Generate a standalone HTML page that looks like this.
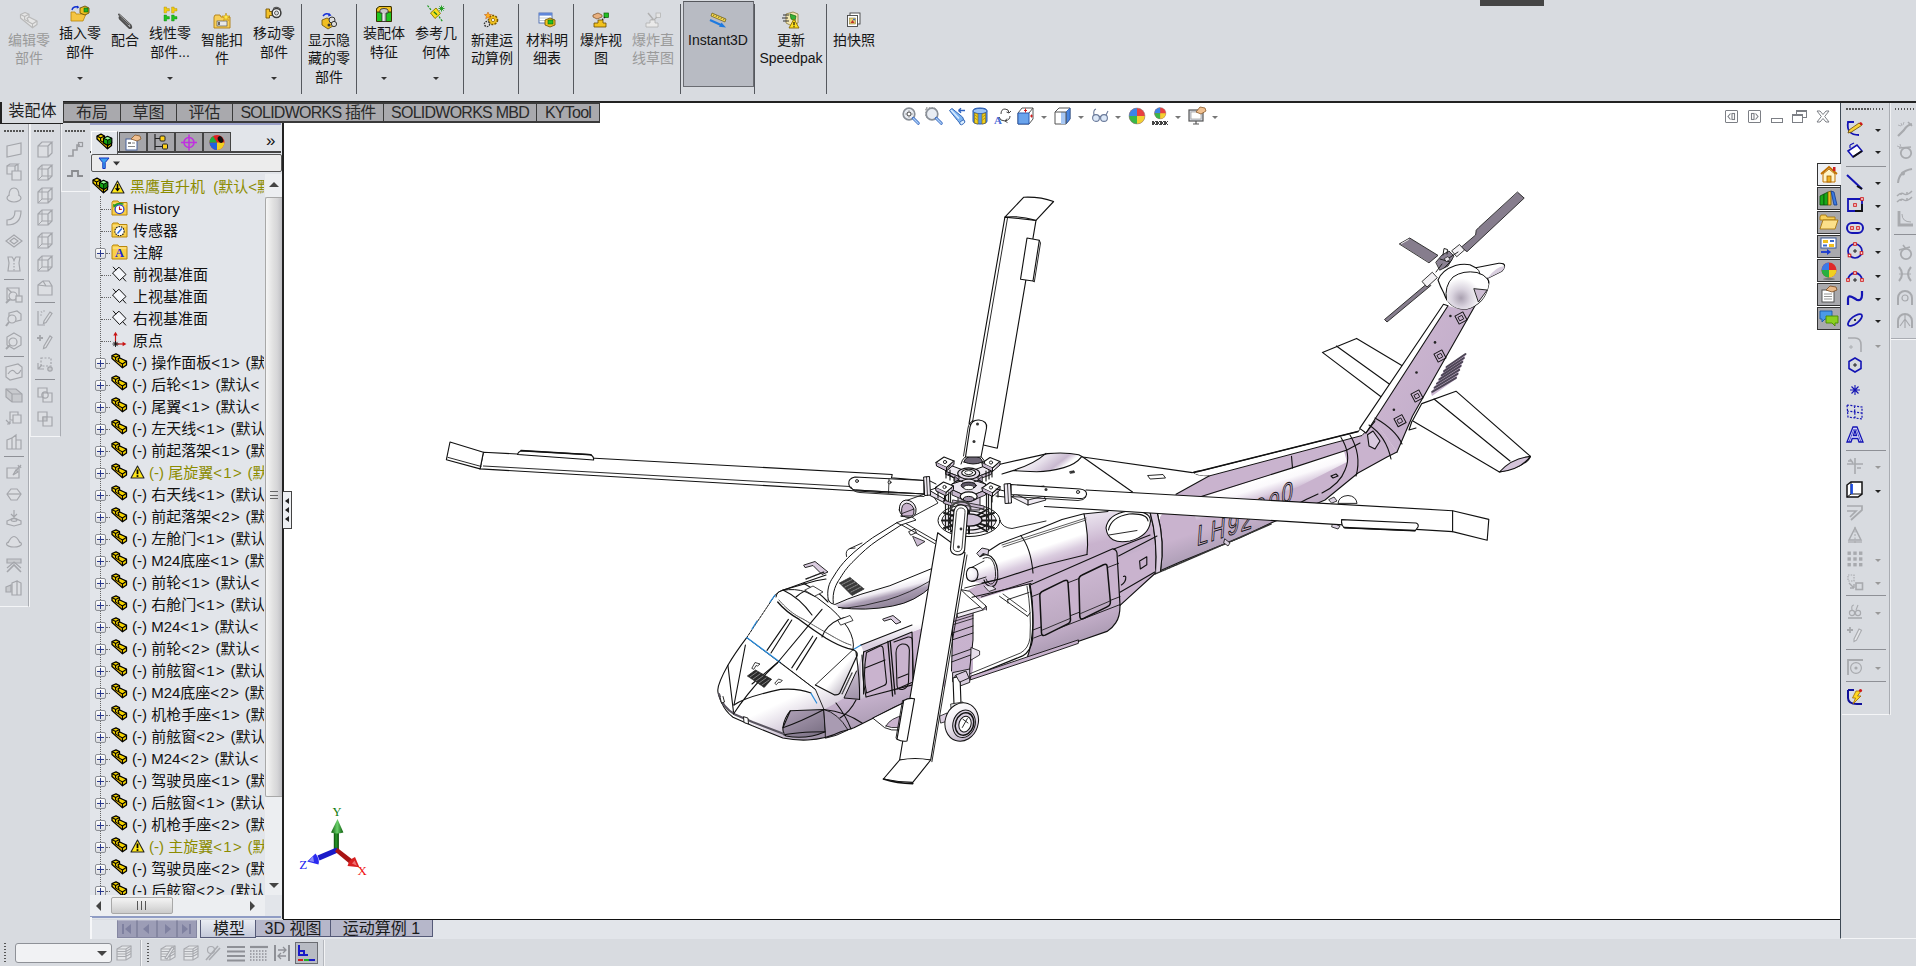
<!DOCTYPE html>
<html lang="zh-CN">
<head>
<meta charset="utf-8">
<title>黑鹰直升机 - SOLIDWORKS</title>
<style>
*{box-sizing:border-box;margin:0;padding:0}
html,body{width:1916px;height:966px;overflow:hidden;background:#d8dbe0;font-family:"Liberation Sans","Noto Sans CJK SC",sans-serif;color:#1a1a1a}
.abs{position:absolute}
#app{position:absolute;left:0;top:0;width:1916px;height:966px;overflow:hidden;background:#d8dbe0}
/* ribbon */
#ribbon{position:absolute;left:0;top:0;width:1916px;height:101px;background:#d8dbe0}
.rb{position:absolute;top:0;height:95px;text-align:center;font-size:14px;line-height:19px;color:#151515;white-space:nowrap}
.rb .t{position:absolute;left:-20px;right:-20px;text-align:center}
.rb.dis{color:#9a9a9a}
.rb svg{position:absolute}
.rsep{position:absolute;top:4px;width:1px;height:90px;background:#55585e}
.rarr{position:absolute;top:77px;width:0;height:0;border-left:3px solid transparent;border-right:3px solid transparent;border-top:3px solid #333}
#ribline{z-index:4;position:absolute;left:0;top:101px;width:1916px;height:2px;background:#222}
/* command tabs */
.ctab{z-index:5;position:absolute;top:102px;height:21px;background:#a9a9ad;border:1px solid #3a3a3a;border-width:2px 1px 2px 1px;font-size:16px;line-height:17px;color:#2a2a2a;text-align:center;white-space:nowrap;overflow:hidden}
.ctab.act{background:#d8dbe0;border-width:0 0 1px 2px;border-color:#222;height:22px;top:102px;line-height:18px;color:#222}
/* viewport */
#view{position:absolute;left:283px;top:103px;width:1557px;height:816px;background:#fff;overflow:hidden}
/* tree */
#fm{position:absolute;left:90px;top:123px;width:194px;height:796px;background:#e2e5ea;border-right:2px solid #222}
.trow{position:absolute;left:0;height:22px;font-size:15px;line-height:22px;white-space:nowrap;color:#111}
.trow.warn{color:#8c8c00}
.tx{position:absolute;top:0}
</style>
</head>
<body>
<div id="app">

<div id="ribbon">
<div class="abs" style="left:683px;top:1px;width:71px;height:86px;background:#b8bbc3;border:1px solid #6a6c72;border-top-color:#55575c"></div>
<div class="rb dis" style="left:-1px;width:60px">
<svg style="left:20px;top:11px" width="20" height="18" viewBox="0 0 20 18"><path d="M1.5 3.5 L6 1.5 L10 3.2 L10 6 L18 10 L18 13.5 L13.5 16.8 L1.5 7Z" fill="#e6e6e6" stroke="#b9b9b9" stroke-width="1.2" stroke-linejoin="round"/><path d="M1.5 3.5 L5.6 5.4 L10 3.2 M5.6 5.4 L5.6 8.4 L13.5 13 L18 10 M13.5 13 L13.5 16.8 M10 6 L8 7.2 L9.5 10" fill="none" stroke="#b9b9b9" stroke-width="1.1" stroke-linejoin="round"/></svg>
<div class="t" style="top:30.5px">编辑零</div>
<div class="t" style="top:49.2px">部件</div>
</div>
<div class="rb" style="left:50px;width:60px">
<svg style="left:20px;top:5px" width="20" height="18" viewBox="0 0 20 18"><path d="M1 8 L1 16 L13 16 L16 9 L6 9 L5 7 L1 7Z" fill="#f5c542" stroke="#b8860b" stroke-width="0.8"/><path d="M10 3 L15 1 L19 3 L19 8 L15 10 L10 8Z" fill="#f0c020" stroke="#5a4500" stroke-width="0.8"/><rect x="14" y="3" width="4" height="4" fill="#22b022" stroke="#0a600a" stroke-width="0.6"/><path d="M2 5 Q3 1 8 2" fill="none" stroke="#1030d0" stroke-width="1.4"/><path d="M7 0.5 L9.5 2.3 L6.8 3.8Z" fill="#1030d0"/></svg>
<div class="t" style="top:24px">插入零</div>
<div class="t" style="top:42.7px">部件</div>
<div class="rarr" style="left:27px"></div>
</div>
<div class="rb" style="left:95px;width:60px">
<svg style="left:21px;top:12px" width="18" height="18" viewBox="0 0 18 18"><path d="M3 2.5 L14.5 13 Q16.5 16.5 13.5 16 L4 7 Q2.5 4.5 5 5 L12.5 12" fill="none" stroke="#4e4e4e" stroke-width="1.9" stroke-linecap="round"/><path d="M3.4 2.8 L14.2 12.8" fill="none" stroke="#d8d8d8" stroke-width="0.6"/></svg>
<div class="t" style="top:30.5px">配合</div>
</div>
<div class="rb" style="left:140px;width:60px">
<svg style="left:22px;top:6px" width="16" height="16" viewBox="0 0 16 16"><g fill="#f2cc10" stroke="#a88600" stroke-width="0.4"><path d="M2 1 L4.6 1 L4.6 2.6 L7.4 2.6 L7.4 5 L4.6 5 L4.6 7 L2 7Z"/><path d="M9.6 1 L12.2 1 L12.2 2.6 L15 2.6 L15 5 L12.2 5 L12.2 7 L9.6 7Z"/></g><g fill="#1fc41f" stroke="#0a7a0a" stroke-width="0.4"><path d="M2 9 L4.6 9 L4.6 10.6 L7.4 10.6 L7.4 13 L4.6 13 L4.6 15 L2 15Z"/><path d="M9.6 9 L12.2 9 L12.2 10.6 L15 10.6 L15 13 L12.2 13 L12.2 15 L9.6 15Z"/></g></svg>
<div class="t" style="top:24px">线性零</div>
<div class="t" style="top:42.7px">部件...</div>
<div class="rarr" style="left:27px"></div>
</div>
<div class="rb" style="left:192px;width:60px">
<svg style="left:21px;top:13px" width="18" height="16" viewBox="0 0 18 16"><path d="M1 4 L1 15 L17 15 L17 4 L8 4 L7 2 L2 2 L1 4Z" fill="#f7cf5a" stroke="#b07d10" stroke-width="0.9"/><rect x="4" y="8" width="10" height="5" fill="#e8e8e8" stroke="#555" stroke-width="0.7"/><rect x="5" y="9" width="2" height="3" fill="#666"/><path d="M13 0 L14 3 L17 3 L14.6 4.8 L15.5 7.5 L13 5.8 L10.5 7.5 L11.4 4.8 L9 3 L12 3Z" fill="#ffe84a" stroke="#c08a00" stroke-width="0.6"/></svg>
<div class="t" style="top:30.5px">智能扣</div>
<div class="t" style="top:49.2px">件</div>
</div>
<div class="rb" style="left:244px;width:60px">
<svg style="left:21px;top:6px" width="18" height="16" viewBox="0 0 18 16"><path d="M1 3 L4.5 3 L4.5 5.5 L8 5.5 L8 9.5 L4.5 9.5 L4.5 12 L1 12Z" fill="#f3c12a" stroke="#7a5800" stroke-width="0.9"/><circle cx="11.5" cy="7" r="4.4" fill="#f4f4f4" stroke="#3a3a3a" stroke-width="1.5"/><circle cx="11.5" cy="7" r="2" fill="#d8dbe0" stroke="#3a3a3a" stroke-width="0.8"/><path d="M8 2.5 Q12 -0.5 16 3.5" fill="none" stroke="#3a3a3a" stroke-width="0.9"/></svg>
<div class="t" style="top:24px">移动零</div>
<div class="t" style="top:42.7px">部件</div>
<div class="rarr" style="left:27px"></div>
</div>
<div class="rb" style="left:299px;width:60px">
<svg style="left:21px;top:12px" width="18" height="18" viewBox="0 0 18 18"><path d="M3 4 Q6 0 10 3" fill="none" stroke="#1530d8" stroke-width="1.5"/><path d="M9 1 L11.5 3.5 L8 4.5Z" fill="#1530d8"/><path d="M2 8 L7 6 L13 9 L13 14 L8 17 L2 13Z" fill="#f0be20" stroke="#6a4c00" stroke-width="0.8"/><circle cx="12" cy="8" r="3" fill="#ddd" stroke="#333" stroke-width="1"/><circle cx="14" cy="12" r="2.6" fill="#ddd" stroke="#333" stroke-width="1"/><circle cx="9" cy="13" r="1.5" fill="#333"/></svg>
<div class="t" style="top:30.5px">显示隐</div>
<div class="t" style="top:49.2px">藏的零</div>
<div class="t" style="top:67.9px">部件</div>
</div>
<div class="rb" style="left:354px;width:60px">
<svg style="left:21px;top:5px" width="18" height="18" viewBox="0 0 18 18"><path d="M1.5 4 L4 1.5 L16 1.5 L16.5 4 L16.5 16.5 L1.5 16.5Z" fill="#1fc41f" stroke="#3a3000" stroke-width="1"/><path d="M1.5 4 L4 1.5 L16 1.5 L16.5 4 L16.5 7 L1.5 7Z" fill="#f2c21e" stroke="#3a3000" stroke-width="1"/><path d="M5 5.5 Q5 3.5 9 3.5 Q13 3.5 13 5.5 L13 8 L11 8 L11 16.5 L7 16.5 L7 8 L5 8Z" fill="#c9c9c9" stroke="#333" stroke-width="0.9"/><path d="M8.2 8.5 L8.2 16" stroke="#fff" stroke-width="0.9"/></svg>
<div class="t" style="top:24px">装配体</div>
<div class="t" style="top:42.7px">特征</div>
<div class="rarr" style="left:27px"></div>
</div>
<div class="rb" style="left:406px;width:60px">
<svg style="left:21px;top:5px" width="18" height="18" viewBox="0 0 18 18"><path d="M3.5 8 L9 3 L13.5 8.5 L8 13.5Z" fill="#f7df1e" stroke="#8a7400" stroke-width="0.9"/><path d="M0.5 0.5 L4 5 M12 11.5 L15.5 16.5" stroke="#1a9a1a" stroke-width="1.2" stroke-dasharray="2.2 1.2"/><path d="M6.8 6.8 L10 9.8" stroke="#1a7a1a" stroke-width="1.2"/><path d="M14.5 0.5 L14.5 6.5 M11.5 3.5 L17.5 3.5 M12.4 1.4 L16.6 5.6 M16.6 1.4 L12.4 5.6" stroke="#1a9a1a" stroke-width="0.9"/></svg>
<div class="t" style="top:24px">参考几</div>
<div class="t" style="top:42.7px">何体</div>
<div class="rarr" style="left:27px"></div>
</div>
<div class="rb" style="left:462px;width:60px">
<svg style="left:21px;top:12px" width="18" height="16" viewBox="0 0 18 16"><circle cx="10" cy="8" r="4.5" fill="#f2c21e" stroke="#7a5800" stroke-width="1.6" stroke-dasharray="2 1.3"/><circle cx="10" cy="8" r="1.6" fill="#fff" stroke="#7a5800" stroke-width="0.7"/><circle cx="4" cy="12" r="2.6" fill="#ddd" stroke="#333" stroke-width="1.3" stroke-dasharray="1.6 1"/><path d="M5 0 L6 2.4 L8.6 2.6 L6.6 4.2 L7.3 6.8 L5 5.3 L2.7 6.8 L3.4 4.2 L1.4 2.6 L4 2.4Z" fill="#ffb020" stroke="#c05000" stroke-width="0.5"/></svg>
<div class="t" style="top:30.5px">新建运</div>
<div class="t" style="top:49.2px">动算例</div>
</div>
<div class="rb" style="left:517px;width:60px">
<svg style="left:21px;top:12px" width="18" height="16" viewBox="0 0 18 16"><rect x="1" y="1" width="13" height="10" fill="#fff" stroke="#4a6ab0" stroke-width="0.9"/><rect x="1" y="1" width="13" height="2.6" fill="#5f86d8"/><path d="M1 6 L14 6 M1 8.5 L14 8.5" stroke="#9ab" stroke-width="0.6"/><path d="M7 8 L12 6 L17 8 L17 13 L12 15 L7 13Z" fill="#f2c21e" stroke="#6a4c00" stroke-width="0.8"/><rect x="10" y="8" width="5" height="4" fill="#22c022" stroke="#0a600a" stroke-width="0.6"/></svg>
<div class="t" style="top:30.5px">材料明</div>
<div class="t" style="top:49.2px">细表</div>
</div>
<div class="rb" style="left:571px;width:60px">
<svg style="left:21px;top:12px" width="18" height="16" viewBox="0 0 18 16"><path d="M1 3 L6 1 L10 3 L10 5 L5 7 L1 5Z" fill="#e8b080" stroke="#7a4a20" stroke-width="0.7"/><rect x="12" y="1" width="4.5" height="4.5" fill="#22c022" stroke="#0a600a" stroke-width="0.7"/><path d="M13 5 L8 10" stroke="#222" stroke-width="1.2" stroke-dasharray="1.5 1"/><path d="M2 11 L6 11 L6 8 L11 8 L11 11 L14 11 L14 15 L2 15Z" fill="#f2c21e" stroke="#6a4c00" stroke-width="0.8"/></svg>
<div class="t" style="top:30.5px">爆炸视</div>
<div class="t" style="top:49.2px">图</div>
</div>
<div class="rb dis" style="left:623px;width:60px">
<svg style="left:21px;top:12px" width="18" height="16" viewBox="0 0 18 16"><rect x="12" y="1" width="4.5" height="4.5" fill="#e4e4e4" stroke="#b0b0b0" stroke-width="0.7"/><path d="M4 1 L9 7 L7 8.5" fill="none" stroke="#b0b0b0" stroke-width="1.5"/><path d="M13 5 L8 10" stroke="#b0b0b0" stroke-width="1.1"/><path d="M2 11 L6 11 L6 8 L11 8 L11 11 L14 11 L14 15 L2 15Z" fill="#e9e9e9" stroke="#b0b0b0" stroke-width="0.8"/></svg>
<div class="t" style="top:30.5px">爆炸直</div>
<div class="t" style="top:49.2px">线草图</div>
</div>
<div class="rb" style="left:688px;width:60px">
<svg style="left:21px;top:11px" width="18" height="18" viewBox="0 0 18 18"><path d="M3 2 L17 8 L16 11 L2 5Z" fill="#f4d64a" stroke="#6a5a10" stroke-width="0.7"/><path d="M5 3.5 L4.5 5 M7.5 4.5 L7 6 M10 5.6 L9.5 7 M12.5 6.6 L12 8 M15 7.7 L14.5 9" stroke="#333" stroke-width="0.6"/><path d="M1 9 L12 14" stroke="#1e7ae0" stroke-width="2.2"/><path d="M17 16.5 L10 15.8 L12.5 11.5Z" fill="#1e7ae0"/></svg>
<div class="t" style="top:30.5px">Instant3D</div>
</div>
<div class="rb" style="left:761px;width:60px">
<svg style="left:21px;top:11px" width="18" height="18" viewBox="0 0 18 18"><path d="M4 3 L11 1 L16 3 L16 12 L10 15 L4 12Z" fill="#f3e6b0" stroke="#8a7a40" stroke-width="0.8"/><path d="M8 3 L14 5 L13 10 L9 8Z" fill="#35b035" stroke="#0a600a" stroke-width="0.6"/><path d="M1 4 L7 4 M0 7 L6 7 M1 10 L7 10" stroke="#333" stroke-width="1"/><path d="M12 8 L17 17 L7 17Z" fill="#ffe020" stroke="#8a6a00" stroke-width="0.9"/><path d="M12 11 L12 14.3 M12 15.2 L12 16.2" stroke="#111" stroke-width="1.2"/></svg>
<div class="t" style="top:30.5px">更新</div>
<div class="t" style="top:49.2px">Speedpak</div>
</div>
<div class="rb" style="left:824px;width:60px">
<svg style="left:22px;top:12px" width="16" height="16" viewBox="0 0 16 16"><rect x="4" y="1" width="10" height="11" fill="#fff" stroke="#444" stroke-width="0.9"/><rect x="1.5" y="3.5" width="10" height="11" fill="#fff" stroke="#444" stroke-width="0.9"/><rect x="3.5" y="6" width="6" height="6" fill="#e8d070" stroke="#7a6a20" stroke-width="0.5"/><path d="M4.5 11 L6.5 8 L8.5 11Z" fill="#c03030"/><circle cx="8" cy="7.5" r="1" fill="#3060d0"/></svg>
<div class="t" style="top:30.5px">拍快照</div>
</div>
<div class="rsep" style="left:301px"></div>
<div class="rsep" style="left:356px"></div>
<div class="rsep" style="left:463px"></div>
<div class="rsep" style="left:518px"></div>
<div class="rsep" style="left:573px"></div>
<div class="rsep" style="left:680px"></div>
<div class="rsep" style="left:754px"></div>
<div class="rsep" style="left:826px"></div>
<div class="abs" style="left:1480px;top:0;width:64px;height:6px;background:#454545"></div>
</div>
<div id="ribline" style="left:63px;width:1853px"></div>
<div class="ctab act" style="left:0px;width:63px">装配体</div>
<div class="ctab" style="left:63px;width:58px">布局</div>
<div class="ctab" style="left:120px;width:57px">草图</div>
<div class="ctab" style="left:176px;width:57px">评估</div>
<div class="ctab" style="left:232px;width:152px;letter-spacing:-0.75px">SOLIDWORKS 插件</div>
<div class="ctab" style="left:383px;width:154px;letter-spacing:-0.75px">SOLIDWORKS MBD</div>
<div class="ctab" style="left:536px;width:64px;letter-spacing:-0.75px">KYTool</div>
<div id="view">
<svg class="abs" style="left:0;top:0" width="1557" height="816" viewBox="283 103 1557 816" fill="none" stroke="#111" stroke-width="1" stroke-linejoin="round" stroke-linecap="round">
<defs>
<linearGradient id="gBoom" gradientUnits="userSpaceOnUse" x1="1272" y1="452" x2="1290" y2="513">
<stop offset="0" stop-color="#c9b3ce"/><stop offset="0.28" stop-color="#c9b3ce"/><stop offset="0.36" stop-color="#fff"/><stop offset="0.46" stop-color="#efe9f2"/><stop offset="0.6" stop-color="#c9b3ce"/><stop offset="0.85" stop-color="#c9b3ce"/><stop offset="1" stop-color="#a697ae"/></linearGradient>
<linearGradient id="gFin" gradientUnits="userSpaceOnUse" x1="1400" y1="350" x2="1450" y2="378">
<stop offset="0" stop-color="#e9e0ec"/><stop offset="0.25" stop-color="#c9b3ce"/><stop offset="0.8" stop-color="#c5b0cc"/><stop offset="1" stop-color="#b09fb8"/></linearGradient>
<linearGradient id="gCabin" gradientUnits="userSpaceOnUse" x1="1060" y1="560" x2="1088" y2="645">
<stop offset="0" stop-color="#c9b3ce"/><stop offset="0.62" stop-color="#c9b3ce"/><stop offset="1" stop-color="#a797af"/></linearGradient>
<linearGradient id="gNac" gradientUnits="userSpaceOnUse" x1="1030" y1="530" x2="1046" y2="578">
<stop offset="0" stop-color="#fff"/><stop offset="0.4" stop-color="#fff"/><stop offset="0.62" stop-color="#daccdf"/><stop offset="0.8" stop-color="#c9b3ce"/><stop offset="1" stop-color="#c3b0ca"/></linearGradient>
<linearGradient id="gNac2" gradientUnits="userSpaceOnUse" x1="1110" y1="510" x2="1124" y2="566">
<stop offset="0" stop-color="#e9e2ed"/><stop offset="0.25" stop-color="#daccdf"/><stop offset="0.5" stop-color="#c9b3ce"/><stop offset="1" stop-color="#c3b0ca"/></linearGradient>
<linearGradient id="gCowl" gradientUnits="userSpaceOnUse" x1="880" y1="540" x2="905" y2="612">
<stop offset="0" stop-color="#fff"/><stop offset="0.55" stop-color="#fff"/><stop offset="0.8" stop-color="#d9cfdf"/><stop offset="1" stop-color="#a99bb2"/></linearGradient>
<linearGradient id="gNose" gradientUnits="userSpaceOnUse" x1="760" y1="660" x2="800" y2="745">
<stop offset="0" stop-color="#fff"/><stop offset="0.5" stop-color="#fff"/><stop offset="0.8" stop-color="#d4cada"/><stop offset="1" stop-color="#9f92a8"/></linearGradient>
<linearGradient id="gChin" gradientUnits="userSpaceOnUse" x1="795" y1="708" x2="812" y2="742">
<stop offset="0" stop-color="#ab9db4"/><stop offset="0.55" stop-color="#8f8398"/><stop offset="1" stop-color="#786e82"/></linearGradient>
<linearGradient id="gSide" gradientUnits="userSpaceOnUse" x1="860" y1="640" x2="880" y2="730">
<stop offset="0" stop-color="#c9b3ce"/><stop offset="0.6" stop-color="#c6b2cd"/><stop offset="1" stop-color="#a697ae"/></linearGradient>
<linearGradient id="gDeck" gradientUnits="userSpaceOnUse" x1="1030" y1="452" x2="1050" y2="478">
<stop offset="0" stop-color="#fff"/><stop offset="0.45" stop-color="#e6dfea"/><stop offset="0.8" stop-color="#c9b9d0"/><stop offset="1" stop-color="#fff"/></linearGradient>
<linearGradient id="gDome" gradientUnits="userSpaceOnUse" x1="1450" y1="268" x2="1475" y2="310">
<stop offset="0" stop-color="#fff"/><stop offset="0.5" stop-color="#f4f0f6"/><stop offset="1" stop-color="#b7a8bf"/></linearGradient>
<linearGradient id="gWheel" gradientUnits="userSpaceOnUse" x1="948" y1="708" x2="975" y2="738">
<stop offset="0" stop-color="#fff"/><stop offset="0.5" stop-color="#ece6ef"/><stop offset="1" stop-color="#b9abc1"/></linearGradient>
</defs>
<path d="M1322.4 352.4 L1356.6 338.4 L1406 368 L1384 399 Z" fill="#fff" stroke="#111" stroke-width="1.12" />
<path d="M1336.4 346 L1392 386" fill="none" stroke="#111" stroke-width="1.12" />
<path d="M1517.7 192.3 L1524.2 198.1 L1467 251.7 L1461 247.4 L1475.6 235 L1476.2 230.2 L1478.5 227.8Z" fill="#867d8d" stroke="#222" stroke-width="0.9" />
<path d="M1399.6 243.8 L1409.7 238 L1438 255.4 L1429.3 262.6Z" fill="#867d8d" stroke="#222" stroke-width="0.9" />
<path d="M1401.5 243.5 L1408.5 239.6" fill="none" stroke="#eee" stroke-width="1" />
<path d="M1427.8 283 L1384.5 319.5 L1387 322 L1430.5 285.8Z" fill="#867d8d" stroke="#222" stroke-width="0.9" />
<path d="M1432 272.5 L1422 281.5 L1427 287 L1437 278Z" fill="#f4f2f5" stroke="#222" stroke-width="0.9" />
<path d="M1452 250.5 L1459.5 244.5 L1464.5 250 L1457 256.5Z" fill="#f4f2f5" stroke="#222" stroke-width="0.9" />
<path d="M1436 262 L1442 255 L1449 251 L1454 256 L1448 266 L1440 270Z" fill="#8a8192" stroke="#222" stroke-width="0.9" />
<path d="M1442 264 L1436 272 M1443 255 L1444 248.5 L1447.5 249.5 L1447 254 M1449 258 L1458 252 M1440 259 L1450 262 M1444 268 L1452 260" fill="none" stroke="#222" stroke-width="1" />
<path d="M1444.5 258.5 L1448 256.5 L1450 259.5 L1446.5 261.5Z" fill="#e6e2e9" stroke="#222" stroke-width="0.7" />
<path d="M1160 517 L1176 494.2 L1209 476 L1362 435.5 L1375 421 L1397 452 L1387 457 L1358 473 L1325 500 L1271 523 L1240 537.7 L1180 562 L1157 572Z" fill="url(#gBoomA)" stroke="none" stroke-width="1.12" />
<linearGradient id="gBoomA" gradientUnits="userSpaceOnUse" x1="1262" y1="470" x2="1282" y2="530"><stop offset="0" stop-color="#c9b3ce"/><stop offset="0.6" stop-color="#c9b3ce"/><stop offset="1" stop-color="#ad9eb6"/></linearGradient>
<linearGradient id="gHi" gradientUnits="userSpaceOnUse" x1="1290" y1="468.6" x2="1296.5" y2="489"><stop offset="0" stop-color="#fff"/><stop offset="0.4" stop-color="#fbf9fc"/><stop offset="0.8" stop-color="#dccfe1"/><stop offset="1" stop-color="#c9b3ce"/></linearGradient>
<path d="M1190 501 L1290 468.6 L1344 451 L1347 462 L1298 487 L1197 522Z" fill="url(#gHi)" stroke="none" stroke-width="1.12" />
<path d="M1192.4 472.6 Q1196 471 1202 470.6 L1358 431.5 L1370.5 418.3 L1375 421.5 L1362 435.5 L1209 476 Q1198 477 1192.4 472.6Z" fill="#fff" stroke="#111" stroke-width="1" />
<path d="M1192 473 L1358 431.5" fill="none" stroke="#111" stroke-width="1.6" />
<path d="M1190 500 L1290 468.6 L1347 450 L1360 443" fill="none" stroke="#111" stroke-width="1.12" />
<path d="M1291.5 456.3 L1292.5 468" fill="none" stroke="#111" stroke-width="1.12" />
<path d="M1155 573 L1180 562 L1240 537.7 L1271 523 L1325 500 L1358 473 L1387 457 L1397 452" fill="none" stroke="#111" stroke-width="1.1" />
<path d="M1155 574 L1271 524" fill="none" stroke="#333" stroke-width="1.6" stroke-dasharray="1 1.2"/>
<path d="M1338 503 Q1339 496 1348 495.5 Q1356 496 1357 503Z" fill="#fff" stroke="#111" stroke-width="0.9" />
<path d="M1329 499.5 L1334 497 L1337 501 L1332 503Z" fill="#d9cfdf" stroke="#111" stroke-width="0.8" />
<path d="M1225 539 L1230 543 L1228 546 L1224 543Z" fill="#d9cfdf" stroke="#111" stroke-width="0.8" />
<path d="M1333 523 L1340 526 L1338 529 L1332 527Z" fill="#d9cfdf" stroke="#111" stroke-width="0.8" />
<text transform="matrix(0.7 -0.225 -0.07 1 1196.5 546)" font-family="Liberation Sans,sans-serif" font-size="29" letter-spacing="3.2" fill="#c9b3ce" stroke="#111" stroke-width="1">LH92</text>
<text transform="matrix(0.7 -0.225 -0.07 1 1253.5 520)" font-family="Liberation Sans,sans-serif" font-size="29" letter-spacing="3.2" fill="#c9b3ce" stroke="#111" stroke-width="1">0</text>
<text transform="matrix(0.7 -0.225 -0.07 1 1267.5 514.5)" font-family="Liberation Sans,sans-serif" font-size="29" letter-spacing="3.2" fill="#c9b3ce" stroke="#111" stroke-width="1">0</text>
<text transform="matrix(0.7 -0.225 -0.07 1 1281 504.5)" font-family="Liberation Sans,sans-serif" font-size="29" letter-spacing="3.2" fill="#c9b3ce" stroke="#111" stroke-width="1">0</text>
<path d="M1341 437.5 Q1352 455 1345 470 Q1340 484 1322 493" fill="none" stroke="#111" stroke-width="1.12" />
<path d="M1350 435 Q1362 455 1356 476" fill="none" stroke="#111" stroke-width="1.12" />
<path d="M1318 494 Q1300 502 1297 505 L1296 513" fill="none" stroke="#111" stroke-width="1.12" />
<path d="M1331 476 L1336 474 L1338 476 L1333 478Z" fill="none" stroke="#111" stroke-width="1.12" />
<path d="M1366 433 L1448 305.8 L1459 309 L1477.7 301 L1412.5 416 L1397 452 L1375 421.5Z" fill="url(#gFin)" stroke="none" stroke-width="1.12" />
<path d="M1359.7 428.4 L1443.5 304.2 L1448 305.8 L1366 433Z" fill="#fff" stroke="#111" stroke-width="1.12" />
<path d="M1477.7 301 L1412.5 416 L1397 452" fill="none" stroke="#111" stroke-width="1.12" />
<path d="M1369 425 Q1386 436 1391 459 M1375 418 Q1396 430 1402 444 M1366 433 L1375 421" fill="none" stroke="#111" stroke-width="1.12" />
<path d="M1367.5 434.7 L1373 431 L1380 441 L1375 449 L1369 446Z" fill="#d9cadf" stroke="#111" stroke-width="1.12" />
<g transform="translate(1461 318) rotate(-28)"><rect x="-4.5" y="-4.5" width="9" height="9" stroke="#111"/><rect x="-2" y="-2" width="4" height="4" stroke="#111" stroke-width="0.8"/></g>
<g transform="translate(1440 356) rotate(-28)"><rect x="-4.5" y="-4.5" width="9" height="9" stroke="#111"/><rect x="-2" y="-2" width="4" height="4" stroke="#111" stroke-width="0.8"/></g>
<g transform="translate(1417 396) rotate(-28)"><rect x="-4.5" y="-4.5" width="9" height="9" stroke="#111"/><rect x="-2" y="-2" width="4" height="4" stroke="#111" stroke-width="0.8"/></g>
<g transform="translate(1400 420.7) rotate(-28)"><rect x="-4.5" y="-4.5" width="9" height="9" stroke="#111"/><rect x="-2" y="-2" width="4" height="4" stroke="#111" stroke-width="0.8"/></g>
<circle cx="1450.4" cy="316" r="1.3" fill="#222" stroke="none"/>
<circle cx="1435" cy="342.4" r="1.3" fill="#222" stroke="none"/>
<circle cx="1416.5" cy="372.5" r="1.3" fill="#222" stroke="none"/>
<circle cx="1393.9" cy="409.8" r="1.3" fill="#222" stroke="none"/>
<path d="M1431 393 L1446 367 L1466 354 L1456 379 L1432 396Z" fill="#cbb8d2" stroke="none" stroke-width="1.12" />
<path d="M1446.5 367.0 L1465.5 354.0" fill="none" stroke="#4d4656" stroke-width="2" />
<path d="M1444.1 371.1 L1463.9 358.0" fill="none" stroke="#4d4656" stroke-width="2" />
<path d="M1441.7 375.3 L1462.3 361.9" fill="none" stroke="#4d4656" stroke-width="2" />
<path d="M1439.4 379.4 L1460.7 365.9" fill="none" stroke="#4d4656" stroke-width="2" />
<path d="M1437.0 383.5 L1459.2 369.9" fill="none" stroke="#4d4656" stroke-width="2" />
<path d="M1434.6 387.6 L1457.6 373.8" fill="none" stroke="#4d4656" stroke-width="2" />
<path d="M1432.2 391.8 L1456.0 377.8" fill="none" stroke="#4d4656" stroke-width="2" />
<path d="M1421.8 403.6 L1456 391.2 L1530.5 456.4 Q1528 462 1519 466 Q1506 471 1499.4 472 L1412.5 420.7Z" fill="#fff" stroke="#111" stroke-width="1.12" />
<path d="M1530.5 456.4 Q1512 458 1499.4 472 Q1520 470 1530.5 456.4Z" fill="#d4c4da" stroke="#111" stroke-width="1.12" />
<path d="M1434 399 L1510 461" fill="none" stroke="#111" stroke-width="1.12" />
<path d="M1412 421 L1409 430 L1416 428" fill="none" stroke="#111" stroke-width="1.12" />
<path d="M1438 280 Q1442 270 1455.4 265.5 Q1463 263.5 1469.9 264.8 L1475.7 267.7 L1498.8 263.3 Q1505 263 1504.6 266.2 Q1504 269.5 1501.7 271.3 L1487.2 278.6 Q1489.5 281 1488.7 284.3 Q1487 294 1481.4 300.3 Q1475 307 1467 309 Q1456 310 1449.6 303.2 Q1445 298 1443.8 293 Q1440 286 1438 280Z" fill="#fff" stroke="#111" stroke-width="1.12" />
<radialGradient id="gDomeR" gradientUnits="userSpaceOnUse" cx="1461" cy="298" r="20"><stop offset="0" stop-color="#a9a0b0"/><stop offset="0.45" stop-color="#d9d3de"/><stop offset="1" stop-color="#fff"/></radialGradient>
<path d="M1446.5 300 Q1444 286 1453 277 Q1463 270 1477 272.5 Q1486 275 1488.7 284.3 Q1487 294 1481.4 300.3 Q1475 307 1467 309 Q1456 310 1449.6 303.2Z" fill="url(#gDomeR)" stroke="none" stroke-width="1.12" />
<path d="M1446.5 300 Q1444 286 1453 277 Q1463 270 1477 272.5 Q1484 274.5 1487.2 278.6" fill="none" stroke="#111" stroke-width="1" />
<path d="M1475.7 267.7 Q1480 270 1480 274" fill="none" stroke="#111" stroke-width="0.9" />
<path d="M1474.2 288.7 L1487.2 290 L1478.6 301.7Z" fill="#cdbdd3" stroke="#111" stroke-width="0.9" />
<path d="M1487.2 278.6 L1501.7 271.3 Q1504 269.5 1504.6 266.2 Q1496 266 1487.2 278.6Z" fill="#d9cfdf" stroke="none" stroke-width="1.12" />
<path d="M1000 464.2 L1047.6 453.6 Q1066 452 1078.7 454.8 L1082.8 457 L1192.4 472.6 Q1198 477 1209 476 L1176 494.2 L1132.5 492 L1000 500Z" fill="#fff" stroke="none" stroke-width="1.12" />
<path d="M1046 453.4 Q1066 452 1078.7 454.8 L1081.5 456.8 Q1076 464 1063.9 467.6 Q1050 471.5 1036.7 471.7 Q1024 471.5 1015 469.7 Q1034 464 1046 453.4Z" fill="url(#gDeck)" stroke="none" stroke-width="1.12" />
<path d="M1000 464.2 L1047.6 453.6 Q1066 452 1078.7 454.8 L1082.8 457 L1192.4 472.6" fill="none" stroke="#111" stroke-width="1.12" />
<path d="M1081.5 456.8 Q1076 464 1063.9 467.6 Q1050 471.5 1036.7 471.7 Q1020 471.4 1013.7 470.4 L1002 474" fill="none" stroke="#111" stroke-width="1.12" />
<path d="M1046 453.4 Q1034 464 1015 469.7" fill="none" stroke="#111" stroke-width="1.12" />
<path d="M1082.8 457 L1132.5 492" fill="none" stroke="#111" stroke-width="1.12" />
<path d="M1209 476 L1176 494.2" fill="none" stroke="#111" stroke-width="1.12" />
<path d="M1070 471.5 L1074 470.8 L1074.5 472.6 L1070.5 473.3Z" fill="#333" stroke="#222" stroke-width="0.8" />
<path d="M1148 475.5 L1163 474.5 L1165.5 478 L1150.5 479Z" fill="#fff" stroke="#111" stroke-width="0.9" />
<path d="M1012 497 L1028 505 L1046 500 L1044 496 L1028 500 L1016 494Z" fill="#efeaf2" stroke="#111" stroke-width="0.9" />
<path d="M1016 494 L1022 489 L1044 486 M1028 505 L1028 500" fill="none" stroke="#111" stroke-width="1.12" />
<path d="M967 571 Q968 560 980 556.5 L1000 543.5 L1040 528.5 L1062 519.5 L1084 514 Q1089 535 1087 554.5 L1040 566 L1000 579 L982 583 Q968 583 967 571Z" fill="url(#gNac)" stroke="none" stroke-width="1.12" />
<path d="M1084 514 L1108 511.5 L1152 515 L1156 545 L1155.5 573 L1120 560 L1087 554.5 Q1089 535 1084 514Z" fill="url(#gNac2)" stroke="none" stroke-width="1.12" />
<path d="M982 583 L1000 579 L1040 566 L1087 554.5 L1114 549 L1119 558.5 L1031 583.5 L975 600 L968 590Z" fill="#c9b3ce" stroke="none" stroke-width="1.12" />
<path d="M980 556.5 L1000 543.5 L1040 528.5 L1062 519.5 L1083 514 L1108 511.5" fill="none" stroke="#111" stroke-width="1.12" />
<path d="M982 583 L1000 579 L1040 566 L1087 554.5" fill="none" stroke="#111" stroke-width="1.12" />
<path d="M1020.7 535.5 Q1031 548 1033 573" fill="none" stroke="#111" stroke-width="1.12" />
<path d="M1084 513.8 Q1089 535 1087 554.5" fill="none" stroke="#111" stroke-width="1.12" />
<path d="M1002 545 L1086 518 M1003 547 L1086 520" fill="none" stroke="#333" stroke-width="0.8" />
<path d="M1106 528 Q1108 514 1128 511 Q1150 510 1150.5 521 Q1149 536 1130 541 Q1108 545 1106 528Z" fill="#fff" stroke="#111" stroke-width="1.12" />
<path d="M1108.5 530 Q1111 517 1129 514 Q1147 513 1148 521" fill="none" stroke="#111" stroke-width="1.12" />
<path d="M1109 535 L1137 530.5" fill="none" stroke="#111" stroke-width="0.9" />
<path d="M1150 512 Q1158 540 1155.5 573 M1157.5 514 Q1165 542 1160.5 571" fill="none" stroke="#111" stroke-width="1.12" />
<path d="M1150 512 L1157.5 514 Q1165 542 1160.5 571 L1155.5 573 Q1158 540 1150 512Z" fill="#daccdf" stroke="none" stroke-width="1.12" />
<path d="M1150 512 Q1158 540 1155.5 573 M1157.5 514 Q1165 542 1160.5 571" fill="none" stroke="#111" stroke-width="1.12" />
<radialGradient id="gBul" cx="0.35" cy="0.35" r="0.8"><stop offset="0" stop-color="#fff"/><stop offset="0.6" stop-color="#f1edf3"/><stop offset="1" stop-color="#b5a8bd"/></radialGradient>
<path d="M966.4 574.5 Q966.6 567.5 972 567.3 Q978 568 978 574.5 Q977.6 581.4 972 581.4 Q966.4 581 966.4 574.5Z" fill="url(#gBul)" stroke="#111" stroke-width="1.12" />
<path d="M972 567.3 L984 561 M972 581.4 L986 577" fill="none" stroke="#111" stroke-width="0.9" />
<path d="M980.4 556.6 Q986 553 991 556.5 Q998.5 563 997.8 577 Q996.5 587.5 990.5 586.5 Q985.5 585 984 580" fill="none" stroke="#111" stroke-width="1.1" />
<path d="M983 558.5 Q988 556 991.5 559.5 Q996 565 995.5 576.5 Q994.5 584.5 990.5 584 Q987 583 986 579" fill="none" stroke="#111" stroke-width="0.9" />
<path d="M977 553 L982 548 L988.7 549.5 L988 555 L983 553.5 L980 556.5Z" fill="#d9cfdf" stroke="#111" stroke-width="0.9" />
<path d="M984 586 L989 591.5 L996 589 L992.5 586.5" fill="#e6dfea" stroke="#111" stroke-width="0.8" />
<path d="M1030 585 L1114 549 L1119 558.5 L1155.5 573 L1120 605.4 Q1120 617 1115.7 622.8 Q1112 628.5 1107 631.4 L1078 641.5 L1027 658.5 Q1033 640 1033 622Z" fill="url(#gCabin)" stroke="none" stroke-width="1.12" />
<path d="M1119 558.5 L1153 545 L1155.5 573 L1120 605.4Z" fill="#c9b3ce" stroke="none" stroke-width="1.12" />
<path d="M1113.9 549 L1150 535" fill="none" stroke="#111" stroke-width="1.12" />
<path d="M1030.1 585 L1112.8 548.8 Q1116.5 549.5 1117 553 L1120 605.4 Q1120 617 1115.7 622.8 Q1112 628.5 1107 631.4 L1078 641.5 L1027 658.5 Q1032 645 1033 622.8 Q1033 600 1030.1 585Z" fill="none" stroke="#111" stroke-width="1.2" />
<path d="M1031.6 596.7 L1118.6 563.3 M1033 630 L1120 596.7 M1033.8 638 L1120 604.6" fill="none" stroke="#111" stroke-width="0.9" />
<linearGradient id="gWin" gradientUnits="userSpaceOnUse" x1="1070" y1="575" x2="1085" y2="625"><stop offset="0" stop-color="#ccb7d1"/><stop offset="1" stop-color="#b9a6be"/></linearGradient>
<path d="M1043.1 591.0 L1064.3 580.6999999999999 Q1067.8 579.3 1068.0 582.8 L1070.5 619.3 Q1070.7 622.8 1067.2 624.1999999999999 L1045.2 635.1 Q1041.7 636.5 1041.5 633.0 L1039.8 595.9 Q1039.6 592.4 1043.1 591.0Z" fill="url(#gWin)" stroke="#111" stroke-width="1.5" />
<path d="M1082.2 575.0 L1103.5 564.6999999999999 Q1107 563.3 1107.2 566.8 L1110.3999999999999 601.9 Q1110.6 605.4 1107.1 606.8 L1083.5 618.5 Q1080 619.9 1079.8 616.4 L1078.9 579.9 Q1078.7 576.4 1082.2 575.0Z" fill="url(#gWin)" stroke="#111" stroke-width="1.5" />
<path d="M1042.5 630 L1070 618.5 M1080.7 613.5 L1110 601" fill="none" stroke="#111" stroke-width="0.8" />
<path d="M1118.6 556 L1157 536 M1120 592.3 L1154.8 572" fill="none" stroke="#111" stroke-width="1.12" />
<path d="M1139.6 561 L1146.8 556.8 L1146.8 564.8 L1140.3 569Z" fill="none" stroke="#111" stroke-width="1.12" />
<path d="M1121.4 585 Q1126 582 1125.8 577 Q1125 575.5 1123.5 576.5" fill="none" stroke="#111" stroke-width="1.12" />
<path d="M1120 605.4 L1155.5 573" fill="none" stroke="#111" stroke-width="1.1" />
<path d="M953 618 L973 612 L973 669 L969.7 682 L953 682 L951.5 671Z" fill="url(#gSide)" stroke="none" stroke-width="1.12" />
<path d="M973 612 L973 640 L969.7 669 M953 618 L951.5 671" fill="none" stroke="#111" stroke-width="1" />
<path d="M952.5 633 L973 626 M952 640 L973 633 M951.8 656 L971.5 649 M951.6 662 L970.6 655" fill="none" stroke="#111" stroke-width="0.9" />
<path d="M952 622 L973 615.5 M952 625 L973 618.5" fill="none" stroke="#111" stroke-width="0.8" />
<path d="M957.3 613.7 L985.4 605.4 L986.2 609 L958 617.5Z" fill="#efeaf2" stroke="#111" stroke-width="0.9" />
<path d="M961.4 589.7 L969.7 591.3 L986.2 606.2 L983 609.5 L967 595.5Z" fill="#fff" stroke="#111" stroke-width="0.9" />
<path d="M983 609.5 L986.2 606.2 L986.5 610" fill="#b9abc1" stroke="#111" stroke-width="0.8" />
<path d="M971.3 647.6 L979.6 651 L979.6 655 L971 660Z" fill="#e6dfea" stroke="#111" stroke-width="0.8" />
<path d="M972 597.3 L1031 583.5" fill="none" stroke="#111" stroke-width="1.12" />
<path d="M964.7 588 L1000 579 M981.3 597 L1032.6 580.6" fill="none" stroke="#111" stroke-width="0.9" />
<path d="M1029.3 584.7 Q1034 610 1032.6 639.3 Q1031 651 1022.6 655.9 L961.4 680.7" fill="none" stroke="#111" stroke-width="1.2" />
<path d="M1027 586 Q1031.5 612 1030 638 Q1028.5 648.5 1020.5 653 L968 674.5" fill="none" stroke="#111" stroke-width="0.8" />
<path d="M953 672.5 L969.7 669 L969.7 682.4 L960 686 L953 682Z" fill="#d9cfdf" stroke="#111" stroke-width="0.9" />
<path d="M955 676 L962 673 L966 677.5 L960 681Z" fill="#fff" stroke="#111" stroke-width="0.8" />
<path d="M999.5 596.3 L1027.6 616.2 M1007.7 599.6 L1029 592.5 M1007.7 599.6 L1008 603 M1027.6 616.2 L1030 613" fill="none" stroke="#111" stroke-width="0.9" />
<path d="M1003 594 L1026.5 611.5" fill="none" stroke="#111" stroke-width="0.8" />
<path d="M1078 640 L1027 657 L971 676 L970 680 L1027 661 L1078 643.5Z" fill="#c9b3ce" stroke="#111" stroke-width="0.9" />
<path d="M783 590 L816 580.7 L828 595 L838 604 L870 612 L905 609 L938 598 L953 618 L913 632.5 L860.5 645 Q850 618 824 603 Q800 590 783 590Z" fill="#fff" stroke="none" stroke-width="1.12" />
<path d="M828.3 600 C826.5 590 829 583 833.3 577 C838 569 842 564 847.8 558 C856 550 864 544 872.5 537.8 L897 522.6 L903 519.5 L940 533 L932.5 585 Q915 603 892.8 606 Q865 611.5 838.4 607.4Z" fill="#fff" stroke="none" stroke-width="1.12" />
<linearGradient id="gCowl2" gradientUnits="userSpaceOnUse" x1="884" y1="586" x2="889" y2="607"><stop offset="0" stop-color="#fff"/><stop offset="0.25" stop-color="#f0ecf3"/><stop offset="0.5" stop-color="#aa9db3"/><stop offset="1" stop-color="#8e8296"/></linearGradient>
<path d="M834.8 604.5 Q848 598.5 860.9 594.3 L889.9 585.7 L932 568.5 L932.5 585 Q915 603 892.8 606 Q865 611.5 838.4 607.4Z" fill="url(#gCowl2)" stroke="none" stroke-width="1.12" />
<path d="M828.3 600 C826.5 590 829 583 833.3 577 C838 569 842 564 847.8 558 C856 550 864 544 872.5 537.8 L897 522.6" fill="none" stroke="#111" stroke-width="1" />
<path d="M833.3 603 C832 592 836 584 840 578.4 C845 570 849 565.5 853.6 561 C862 552.5 869 546 878 540 L901.4 524.8" fill="none" stroke="#111" stroke-width="1" />
<path d="M828.3 600 Q830 604 834.8 604.5 Q848 598.5 860.9 594.3 L889.9 585.7 L932 568.5" fill="none" stroke="#111" stroke-width="1" />
<path d="M842 608.8 Q866 606 887 600 Q910 593 930 581" fill="none" stroke="#111" stroke-width="0.8" />
<path d="M838.4 607.4 Q865 611.5 892.8 606 Q915 602 932 586" fill="none" stroke="#111" stroke-width="1" />
<path d="M839.5 583 L850 577.5 L864 589 L852 595.5Z" fill="#3a3a3a" stroke="#222" stroke-width="0.8" stroke-dasharray="1.2 0.8"/>
<path d="M842 584.5 L852 579.5 M845 587 L855 582 M848 589.5 L858 584.5 M851 592 L861 587" fill="none" stroke="#c8c8c8" stroke-width="0.6" stroke-dasharray="1 1"/>
<path d="M909 531.5 L914.5 529 L916.5 532.5 L911 535Z" fill="#fff" stroke="#111" stroke-width="0.9" />
<path d="M913 536.5 L925 541.5 L917.5 546Z" fill="#c9b9d0" stroke="#111" stroke-width="0.8" />
<path d="M901.4 524.8 L934.8 543.6 M904.5 522.8 L937 541.5" fill="none" stroke="#111" stroke-width="0.9" />
<path d="M846.5 556.5 Q845 550 850 548.5 L855 548 M850 548.5 L862 543" fill="none" stroke="#111" stroke-width="0.9" />
<path d="M901 516 L906.5 500.5 L930.4 492 L938 503 L912 517Z" fill="#fff" stroke="#111" stroke-width="0.9" />
<path d="M899.3 510 Q899 501 906 500 Q914 500.5 916 508.5 Q916.5 517 910 517.5 Q900.5 517.5 899.3 510Z" fill="#efeaf2" stroke="#111" stroke-width="1" />
<path d="M901.6 512 Q901 504 906.5 503.2 Q912.5 503.5 914 510 Q914.3 515 912 516 L902.5 516Z" fill="#c9b3ce" stroke="#111" stroke-width="0.9" />
<path d="M902 513.5 L914 509" fill="none" stroke="#111" stroke-width="0.8" />
<path d="M897 522.6 L912 517 L916 520 L901.4 524.8Z" fill="#fff" stroke="#111" stroke-width="0.9" />
<path d="M804 565 L815 561.5 L828 572 L822 574.5 L813 565.5 L805.5 567.5Z" fill="#daccdf" stroke="#111" stroke-width="0.9" />
<path d="M806 579 L824 572" fill="none" stroke="#222" stroke-width="1.4" stroke-dasharray="1 1"/>
<path d="M883 619 L893 615.5 L901 622 L896 624 L891 619 L884.5 621Z" fill="#daccdf" stroke="#111" stroke-width="0.9" />
<path d="M783 590 L816 580.7 L826 579" fill="none" stroke="#111" stroke-width="1.12" />
<path d="M717.8 692 Q718 683 727.9 665.2 Q735 653 746.7 637.6 L775 595.2 Q778 591.5 783 590 Q800 590 824 603 Q850 618 861 645 L866 697 L854 727.7 Q848 730 840.7 731.7 Q826 739 807.7 740 Q795 740.5 782.8 738 L751.8 725.6 L733 717.3 Q723 710 720.7 703 Q717.8 697 717.8 692Z" fill="url(#gNose)" stroke="none" stroke-width="1.12" />
<linearGradient id="gPane" gradientUnits="userSpaceOnUse" x1="822" y1="668" x2="848" y2="690"><stop offset="0" stop-color="#fff"/><stop offset="0.45" stop-color="#fff"/><stop offset="1" stop-color="#b8b0be"/></linearGradient>
<path d="M815.4 685 L834.2 694.8 Q838 695.5 839.6 693.4 L857 655.8 L853 649.7Z" fill="url(#gPane)" stroke="none" stroke-width="1.12" />
<linearGradient id="gQw" gradientUnits="userSpaceOnUse" x1="850" y1="662" x2="858" y2="700"><stop offset="0" stop-color="#d8cede"/><stop offset="1" stop-color="#9d90a6"/></linearGradient>
<path d="M856.5 671 L844 698 L859.6 699.4 L862 655Z" fill="url(#gQw)" stroke="none" stroke-width="1.12" />
<path d="M824 709.5 L836 703 L844 698 L859.6 699.4 L866 697 L913.4 684.6 L945 676 L945 686 L912 699 L894.6 707 L873 718.3 L854 727.7 Q848 730 840.7 731.7 L825.3 731.7Z" fill="url(#gSide)" stroke="none" stroke-width="1.12" />
<path d="M863.6 652 L912 632 L945 619 L945 676 L913.4 684.6 L866 696.7Z" fill="#c9b3ce" stroke="none" stroke-width="1.12" />
<linearGradient id="gRoofS" gradientUnits="userSpaceOnUse" x1="888" y1="628" x2="890" y2="643"><stop offset="0" stop-color="#fff"/><stop offset="1" stop-color="#d9cfdf"/></linearGradient>
<path d="M861 645 L912 625 L945 612 L945 619 L912 632 L863.6 652Z" fill="url(#gRoofS)" stroke="none" stroke-width="1.12" />
<path d="M790.3 710.8 L824 709.5 L825.3 731.7 Q806 740 786 736 Q782.5 733 782.9 727.7Z" fill="url(#gChin)" stroke="#111" stroke-width="1.12" />
<path d="M824 709.5 Q838 713 848 730 Q836 736.5 825.3 738.2 L825.3 731.7Z" fill="#a99bb2" stroke="#111" stroke-width="0.9" />
<path d="M721.8 702.9 Q717.5 694 717.8 690 Q718 683 727.9 665.2 Q735 653 746.7 637.6" fill="none" stroke="#111" stroke-width="1.1" />
<path d="M746.7 637.6 L775 595.2" fill="none" stroke="#111" stroke-width="1" stroke-dasharray="2.2 1.2"/>
<path d="M775 595.2 Q778 591.5 783 590" fill="none" stroke="#111" stroke-width="1" />
<path d="M721.8 702.9 Q725 711 733 717.3 L751.8 725.6 L782.8 738 Q795 740.5 807.7 740 Q826 739 840.7 731.7 Q848 730 854 727.7 L873 718.3 L894.6 707 L912 699" fill="none" stroke="#111" stroke-width="1.1" />
<path d="M719 694 Q722 707 735 714.5 L752.5 722 L784 734" fill="none" stroke="#5a5560" stroke-width="2.2" />
<path d="M745.4 645 L734 705 M727.9 665.2 L733.5 712" fill="none" stroke="#111" stroke-width="1.12" />
<path d="M734 705 Q745 697 780.4 689.4 Q798 688 811 693 M733.5 714 Q752 686 777.7 662.5" fill="none" stroke="#111" stroke-width="1.12" />
<path d="M746.7 637.6 L815.4 689.4 L824 709.5" fill="none" stroke="#111" stroke-width="0.9" />
<path d="M775 595.2 L770 602 M757 621 L752 629" fill="none" stroke="#2a8ad8" stroke-width="1.2" />
<path d="M746.7 637.6 L780.4 662.5" fill="none" stroke="#2a8ad8" stroke-width="1.3" />
<path d="M811 693.4 L816.7 703" fill="none" stroke="#2a8ad8" stroke-width="1.2" />
<path d="M853 649.7 L861 645" fill="none" stroke="#2a8ad8" stroke-width="1.2" />
<path d="M822 609.3 L777.7 662.5 L752 684" fill="none" stroke="#111" stroke-width="1.12" />
<path d="M777.7 602 Q786 612 799.2 619.4 Q812 629 826 638.3 Q838 645.5 847.7 648.4 L853 649.7" fill="none" stroke="#111" stroke-width="1.3" />
<path d="M776 597 Q776.5 592 782 590.5 Q795 588 806 592 Q818 597 824 603 Q838 613 848 628 Q855 640 853 649.7" fill="none" stroke="#111" stroke-width="1" />
<path d="M779 600 Q790 613 803 619 Q818 628 832 636 Q844 643 851 645" fill="none" stroke="#111" stroke-width="0.8" stroke-dasharray="1.4 1"/>
<path d="M822 637 Q826 625 840 619 Q846 617 850 618 M796 597 Q803 590 815 588.5" fill="none" stroke="#111" stroke-width="1.12" />
<path d="M788.4 619.4 L767 650.4 M791.8 620 L771 653 M812.7 636.2 L791.8 667.9 M816.7 637.6 L796.5 669.9" fill="none" stroke="#111" stroke-width="1.12" />
<path d="M780.4 662.5 L815.4 689.4" fill="none" stroke="#111" stroke-width="0.9" stroke-dasharray="1.5 1"/>
<path d="M815.4 685 L834.2 694.8 Q838 695.5 839.6 693.4 L857 655.8" fill="none" stroke="#111" stroke-width="1.2" />
<path d="M853 649.7 Q858.5 652 857 655.8" fill="none" stroke="#111" stroke-width="1.12" />
<path d="M853 649.7 L815.4 685" fill="none" stroke="#111" stroke-width="0.9" />
<path d="M856.5 671 L844 698 L859.6 699.4" fill="none" stroke="#111" stroke-width="1" />
<path d="M852 673 L842 694" fill="none" stroke="#444" stroke-width="1.4" stroke-dasharray="1 1"/>
<path d="M856 652 Q860 680 859.6 699.4 M862 655 Q864 680 863.6 694" fill="none" stroke="#111" stroke-width="1.12" />
<path d="M784.4 589.8 L803 583 L826 575 M783 590 Q800 598 812 615 M803 583 Q818 591 828 602" fill="none" stroke="#111" stroke-width="1.12" />
<path d="M805 590 L813 586 L823 592 L815 596Z" fill="#fff" stroke="#111" stroke-width="0.8" />
<path d="M838 620 L850 615.5 L853 620.5 L841 625Z" fill="#fff" stroke="#111" stroke-width="0.8" />
<path d="M747.4 676 L755.5 670 L771.6 679.3 L764.2 687.4Z" fill="#2a2a2a" stroke="#222" stroke-width="0.8" stroke-dasharray="1 0.8"/>
<path d="M750 677 L757 672 M753 679 L760 674 M756 681 L763 676 M759 683 L766 678 M762 685 L769 680" fill="none" stroke="#bbb" stroke-width="0.6" />
<path d="M752 668 L755 662.5 L760 664 L757.5 666 L756 665.5 L754 669Z M775 683 L778.5 679 L782.4 680.5 L780 682.6 L778.8 682 L776.6 684.4Z" fill="#fff" stroke="#111" stroke-width="0.8" />
<path d="M720 697 L721.5 703 L724.5 702 L723 696.5 M743.5 717 L744 722.5 L748.5 724 L748 718.5Z" fill="#fff" stroke="#111" stroke-width="0.9" />
<path d="M782.9 727.7 Q800 722 824 709.5 M790.3 710.8 Q784 718 782.9 727.7 M784 735 Q795 732 825.3 731.7" fill="none" stroke="#111" stroke-width="1.12" />
<path d="M836 703 Q846 716 851 729 M824 709.5 Q846 712 862 723 M840 718 Q850 712 856 700" fill="none" stroke="#111" stroke-width="1.12" />
<path d="M861 645 L912 625 M863.6 652 L912 632 L913.4 683.3" fill="none" stroke="#111" stroke-width="1.12" />
<path d="M863.6 652 Q861 675 866 696.7" fill="none" stroke="#111" stroke-width="1.12" />
<path d="M866.5 652.5 L880 646 Q882.5 645.5 883 648 L886.5 682 Q886.5 684.6 884 685.5 L866.5 693 Q862.5 675 866.5 652.5Z" fill="#c9b3ce" stroke="#111" stroke-width="1.1" />
<path d="M865 668 L885 660" fill="none" stroke="#111" stroke-width="1.12" />
<path d="M887.9 641.5 L892.6 696 M890.2 640.8 L895 694" fill="none" stroke="#111" stroke-width="1.3" />
<path d="M896 653 Q896 645.5 902 644 Q909 643.5 909.4 650 L908.5 682 Q908 688 902.5 689.5 Q897 690 897 685Z" fill="#c9b3ce" stroke="#111" stroke-width="1.1" />
<path d="M894 642 L908 637 Q912 636.5 912.4 640 L913 682 L897 689" fill="none" stroke="#111" stroke-width="1.1" />
<path d="M898 678 L908 674" fill="none" stroke="#111" stroke-width="1.12" />
<path d="M866 697 L913.4 684.6" fill="none" stroke="#111" stroke-width="1.12" />
<path d="M873 718.3 L884.7 727.7 Q892 731 898 730 L908 722 L912 699Z" fill="#fff" stroke="#111" stroke-width="0.9" />
<path d="M886 726 Q890 718 905 715 L908 722 Q898 731 886 726Z" fill="#c9b3ce" stroke="#111" stroke-width="0.8" />
<path d="M953 678 L960 676 L961 704 L954 705Z" fill="#fff" stroke="#111" stroke-width="1.12" />
<path d="M951 704 L963 702 L963.5 707 L951.5 709Z" fill="#eee" stroke="#111" stroke-width="0.8" />
<path d="M956 675 L966 671 L969 678 L960 682Z" fill="#daccdf" stroke="#111" stroke-width="0.9" />
<path d="M940 716 L947 713 L948 721 L941 723Z" fill="#daccdf" stroke="#111" stroke-width="0.8" />
<g transform="rotate(18 961.7 722)"><ellipse cx="961.7" cy="722" rx="16.5" ry="19.5" fill="url(#gWheel)" stroke="#111"/><ellipse cx="964.5" cy="723" rx="11" ry="14" fill="#d9cfdf" stroke="#111"/><ellipse cx="965" cy="723" rx="9" ry="11.5" fill="none" stroke="#111" stroke-width="1.5"/><ellipse cx="965.5" cy="723" rx="6" ry="8" fill="#fff" stroke="#111"/><path d="M962 719 L968 721 M966 717 L964 727" stroke="#111" stroke-width="0.8"/></g>
<ellipse cx="969" cy="520.5" rx="31" ry="16" fill="#fff" stroke="#111"/>
<path d="M1000 521 Q1003 528 1012 528.5 L1046 521" fill="none" stroke="#111" stroke-width="0.9" />
<ellipse cx="969" cy="520.5" rx="27" ry="13" fill="#f3eff5" stroke="#111" stroke-width="0.9"/>
<path d="M944 513 L994 528 M944 528 L994 513 M969 507.5 L969 533.5 M942 520.5 L996 520.5 M951 509.5 L987 531.5 M951 531.5 L987 509.5" fill="none" stroke="#1a1a1a" stroke-width="2" />
<ellipse cx="969" cy="520" rx="13" ry="6.2" fill="#cfc2d6" stroke="#111" stroke-width="1.2"/>
<ellipse cx="969" cy="520.5" rx="20" ry="9.5" fill="none" stroke="#111" stroke-width="1.2"/>
<path d="M958 470 L958 510 L980 510 L980 470Z" fill="#d7ccdd" stroke="#111" stroke-width="0.9" />
<path d="M952 484 L968.7 478.5 L985.5 484 L985.5 490 L968.7 497 L952 490Z" fill="#ebe5ef" stroke="#111" stroke-width="1" />
<path d="M952 490 L952 495 L968.7 502 L985.5 495 L985.5 490 L968.7 497Z" fill="#c6b7cd" stroke="#111" stroke-width="0.9" />
<ellipse cx="968.7" cy="496.5" rx="8.5" ry="4.6" fill="#fff" stroke="#111" stroke-width="1.2"/>
<ellipse cx="968.7" cy="499" rx="5.5" ry="2.6" fill="#9d90a6" stroke="#111"/>
<ellipse cx="968.7" cy="485.5" rx="7.5" ry="3.4" fill="#5d5666" stroke="#111"/>
<ellipse cx="968.7" cy="487.5" rx="5" ry="2.2" fill="#fff" stroke="#111" stroke-width="0.8"/>
<path d="M945.5 492 L945.5 530" fill="none" stroke="#222" stroke-width="1.2" />
<path d="M948.5 492 L948.5 530" fill="none" stroke="#222" stroke-width="1.2" />
<path d="M950.5 492 L950.5 530" fill="none" stroke="#222" stroke-width="1.2" />
<path d="M986.5 492 L986.5 530" fill="none" stroke="#222" stroke-width="1.2" />
<path d="M988.5 492 L988.5 530" fill="none" stroke="#222" stroke-width="1.2" />
<path d="M991.5 492 L991.5 530" fill="none" stroke="#222" stroke-width="1.2" />
<path d="M953 500 L984 506 L984 509 L953 503Z" fill="#c6b7cd" stroke="#111" stroke-width="0.8" />
<path d="M927 489 L947 500.5 L948 504.5 L930 495.5" fill="#e4dce8" stroke="#111" stroke-width="1" />
<path d="M944 500 L952 503 L952 506 L944 503.5Z" fill="#c6b7cd" stroke="#111" stroke-width="0.8" />
<path d="M951 465.5 L963 470 L959 476.5 L946 471.5Z M986 465.5 L974 470 L978 476.5 L991 471.5Z" fill="#efeaf2" stroke="#111" stroke-width="1" />
<path d="M946 471.5 L959 476.5 L959 479.5 L946 474.5Z M991 471.5 L978 476.5 L978 479.5 L991 474.5Z" fill="#c6b7cd" stroke="#111" stroke-width="0.9" />
<path d="M946 468 L946 478 M950 470 L950 480 M948 474 L954 478 L954 481 M989 468 L989 479 M992 467 L992 477 M986 471 L986 481" fill="none" stroke="#111" stroke-width="1.1" />
<path d="M955 476.5 L959 480 L955 482Z M982 476.5 L978 480 L982 482Z" fill="#a99bb2" stroke="#111" stroke-width="0.8" />
<path d="M936 462.5 L944 457 L954 461 L946.5 467.5Z" fill="#fff" stroke="#111" stroke-width="1.1" /><path d="M936 462.5 L936.5 466 L946.5 471 L946.5 467.5 M946.5 471 L954 464.5 L954 461" fill="#c6b7cd" stroke="#111" stroke-width="1" /><circle cx="945" cy="462" r="1.6" fill="#fff" stroke="#111" stroke-width="0.9"/>
<path d="M982 463.0 L990 457.5 L1000 461.5 L992.5 468.0Z" fill="#fff" stroke="#111" stroke-width="1.1" /><path d="M982 463.0 L982.5 466.5 L992.5 471.5 L992.5 468.0 M992.5 471.5 L1000 465.0 L1000 461.5" fill="#c6b7cd" stroke="#111" stroke-width="1" /><circle cx="991" cy="462.5" r="1.6" fill="#fff" stroke="#111" stroke-width="0.9"/>
<path d="M964 462 Q965 456.5 973 456 Q981.5 456.5 982.5 462 Q973 466 964 462Z" fill="#6d6675" stroke="#111" stroke-width="1" />
<path d="M961 464 Q963 455 973 454 Q984 455 985 464" fill="none" stroke="#111" stroke-width="1" />
<ellipse cx="968.7" cy="473.5" rx="11" ry="5.6" fill="#e4dce8" stroke="#111" stroke-width="1.1"/>
<ellipse cx="968.7" cy="472.8" rx="7" ry="3.6" fill="#fff" stroke="#111" stroke-width="1.1"/>
<ellipse cx="968.7" cy="472.6" rx="4" ry="2" fill="#fff" stroke="#111" stroke-width="0.9"/>
<path d="M952 484 L958 480 L963 482 M985.5 484 L979 480 L974 482" fill="none" stroke="#111" stroke-width="1" />
<path d="M935.5 487.5 L943.5 482 L953.5 486 L946.0 492.5Z" fill="#fff" stroke="#111" stroke-width="1.1" /><path d="M935.5 487.5 L936.0 491 L946.0 496 L946.0 492.5 M946.0 496 L953.5 489.5 L953.5 486" fill="#c6b7cd" stroke="#111" stroke-width="1" /><circle cx="944.5" cy="487" r="1.6" fill="#fff" stroke="#111" stroke-width="0.9"/>
<path d="M982 488.0 L990 482.5 L1000 486.5 L992.5 493.0Z" fill="#fff" stroke="#111" stroke-width="1.1" /><path d="M982 488.0 L982.5 491.5 L992.5 496.5 L992.5 493.0 M992.5 496.5 L1000 490.0 L1000 486.5" fill="#c6b7cd" stroke="#111" stroke-width="1" /><circle cx="991" cy="487.5" r="1.6" fill="#fff" stroke="#111" stroke-width="0.9"/>
<path d="M938 492 L938 498 M944.5 496 L944.5 501 M998 492 L998 497 M992 497 L992 502" fill="none" stroke="#111" stroke-width="1.1" />
<path d="M483.4 452.2 L892.2 474.5 L891.5 477.8 L924 480.6 L924 492.8 L887.5 493 L854 490.8 L480.1 468.9Z" fill="#fff" stroke="#111" stroke-width="1.12" />
<path d="M483.4 466 L850 486.5" fill="none" stroke="#111" stroke-width="0.9" />
<path d="M450 442 L483.4 452.2 L480.1 468.9 L446.4 459.7Z" fill="#fff" stroke="#111" stroke-width="1.12" />
<path d="M448 457.4 L481 466.4" fill="none" stroke="#111" stroke-width="0.9" />
<path d="M517.6 454.5 Q518 451.5 522 450.7 L590 454.6 Q594 456 593.6 460 Z" fill="#fff" stroke="#111" stroke-width="1.12" />
<path d="M521 450.6 L591 454.8" fill="none" stroke="#111" stroke-width="1.6" />
<path d="M855 477 Q848 478.5 848.8 484 Q849.5 489.5 856 490 L924 494 L924 480.5Z" fill="#fff" stroke="#111" stroke-width="1.12" />
<path d="M851 487 Q853 492 860 492.5 L924 496.5" fill="none" stroke="#111" stroke-width="0.9" />
<path d="M856 490 L924 494" fill="none" stroke="#111" stroke-width="0.9" />
<path d="M889 479 L888.5 493" fill="none" stroke="#111" stroke-width="0.8" />
<circle cx="857" cy="481" r="1.5" fill="#ccc" stroke="#111" stroke-width="0.8"/><circle cx="889.5" cy="482.3" r="1.5" fill="#ccc" stroke="#111" stroke-width="0.8"/>
<path d="M924 477 L929.5 476.5 L930.5 495 L925 495.5Z" fill="#efeaf2" stroke="#111" stroke-width="1" />
<path d="M926.5 477 L927.5 495.5" fill="none" stroke="#111" stroke-width="0.8" />
<path d="M930 481 L936 484 M930.5 490 L936 488" fill="none" stroke="#111" stroke-width="1" />
<path d="M1004.9 217.1 L1036 220.4 L997.3 448.2 L983.4 445 L984 432 L969.1 423.4Z" fill="#fff" stroke="#111" stroke-width="1.12" />
<path d="M1007.6 217.5 L972 425" fill="none" stroke="#111" stroke-width="0.9" />
<path d="M1004.9 217.1 L1023.8 197.2 Q1040 196.5 1053.6 201.5 L1036 220.4 Q1020 215.5 1004.9 217.1Z" fill="#fff" stroke="#111" stroke-width="1.12" />
<path d="M1027 238 L1039.3 240.3 L1033 281 L1020.5 279.3Z" fill="#fff" stroke="#111" stroke-width="1.12" />
<path d="M1039.3 240.3 L1040.5 243 L1034.3 282 L1033 281" fill="none" stroke="#111" stroke-width="0.9" />
<path d="M965.5 457 L970 427 Q971.5 419.5 979 420 Q987.5 421 986.5 428 L981 457Z" fill="#fff" stroke="#111" stroke-width="1.12" />
<path d="M963.5 456 L968 428 Q969 422 973 420.5" fill="none" stroke="#111" stroke-width="0.9" />
<circle cx="977.5" cy="424" r="1.5" fill="#333" stroke="none"/><circle cx="974" cy="441.5" r="1.5" fill="#333" stroke="none"/>
<path d="M1044.5 506.5 L1086 490 L1452.6 510.7 L1452.6 531.6Z" fill="#fff" stroke="none" stroke-width="1.12" />
<path d="M1086 490 L1452.6 510.7 M1044.5 506.5 L1452.6 531.6" fill="none" stroke="#111" stroke-width="1.12" />
<path d="M1452.6 510.7 L1488.8 519.4 L1487.2 540.2 L1452.6 531.6Z" fill="#fff" stroke="#111" stroke-width="1.12" />
<path d="M1341.6 519.6 L1416 523 Q1419 524 1418 527 L1415 531 L1345 528 Q1341 526 1341.6 519.6Z" fill="#fff" stroke="#111" stroke-width="1.12" />
<path d="M1344 527.5 L1415 530.5" fill="none" stroke="#111" stroke-width="1.5" />
<path d="M1011 484.5 L1080 489 Q1087 490 1086.5 494.5 Q1085.5 499 1079 498.5 L1011 494.5Z" fill="#fff" stroke="#111" stroke-width="1.12" />
<path d="M1011 496.5 L1078 500.5 Q1084 500.5 1086 497" fill="none" stroke="#111" stroke-width="0.9" />
<circle cx="1046" cy="489.5" r="1.5" fill="#333" stroke="none"/><circle cx="1078" cy="492" r="1.6" fill="#ccc" stroke="#111" stroke-width="0.8"/>
<path d="M1004.5 484 L1010.5 483.5 L1011.5 503 L1005.5 503.5Z" fill="#efeaf2" stroke="#111" stroke-width="1" />
<path d="M1007.5 484 L1008.5 503" fill="none" stroke="#111" stroke-width="0.8" />
<path d="M996 489 L1004.5 491 M996 496 L1004.5 497" fill="none" stroke="#111" stroke-width="1" />
<path d="M937.7 532.7 L965 552.6 L930.7 760 L899.6 760Z" fill="#fff" stroke="#111" stroke-width="1.12" />
<path d="M967 555 L931.9 761.7" fill="none" stroke="#111" stroke-width="0.9" />
<path d="M899.6 760 Q915 757 930.7 760 L912.8 782.4 Q897 782 883.4 779Z" fill="#fff" stroke="#111" stroke-width="1.12" />
<path d="M883.4 779 Q897 783.5 912.8 783.6" fill="none" stroke="#111" stroke-width="1.6" />
<path d="M903.7 700.4 Q909 697.5 914.5 698.8 L907 741 Q902 742 897 739.3Z" fill="#fff" stroke="#111" stroke-width="1.12" />
<path d="M897 739.3 L896 738 L902.5 700.5 L903.7 700.4" fill="none" stroke="#111" stroke-width="0.9" />
<path d="M954 511 Q955.5 504.5 961.5 505 Q968.5 506 967.7 512 L964.6 550 Q963 555.5 957 555 Q950 554 950.5 548Z" fill="#fff" stroke="#111" stroke-width="1.12" />
<path d="M956.5 512 Q957.5 507.5 961.5 508 Q965.5 508.5 965 512.5 L962 548 Q961 552 957 551.5 Q953 551 953.3 547.5Z" fill="none" stroke="#111" stroke-width="0.8" />
<path d="M951 509 Q953 501.5 962 501.5 Q971 502.5 970.5 510" fill="none" stroke="#444" stroke-width="2" />
<circle cx="961" cy="529" r="1.4" fill="#333" stroke="none"/><circle cx="958.5" cy="547" r="1.4" fill="#333" stroke="none"/>
</svg>
<svg class="abs" style="left:618px;top:3px" width="20" height="20" viewBox="0 0 20 20" fill="none"><circle cx="8" cy="8" r="5.8" fill="#e9edf3" stroke="#8a9098" stroke-width="1.7"/><path d="M12.3 12.3 L17.3 17.3" stroke="#3f6fc4" stroke-width="3" stroke-linecap="round"/><path d="M12.5 12.5 L17.2 17.2" stroke="#a9cdf6" stroke-width="1.4" stroke-linecap="round"/><path d="M8 4.5 L8 11.5 M4.5 8 L11.5 8" stroke="#555" stroke-width="0.9"/><rect x="6.3" y="6.3" width="3.4" height="3.4" fill="#fff" stroke="#555" stroke-width="0.7"/></svg>
<svg class="abs" style="left:641px;top:3px" width="20" height="20" viewBox="0 0 20 20" fill="none"><rect x="2" y="2" width="9" height="9" stroke="#555" stroke-width="0.9" stroke-dasharray="1.6 1.2"/><circle cx="8" cy="8" r="5.8" fill="#e9edf3" stroke="#8a9098" stroke-width="1.7"/><path d="M12.3 12.3 L17.3 17.3" stroke="#3f6fc4" stroke-width="3" stroke-linecap="round"/><path d="M12.5 12.5 L17.2 17.2" stroke="#a9cdf6" stroke-width="1.4" stroke-linecap="round"/></svg>
<svg class="abs" style="left:664px;top:3px" width="20" height="20" viewBox="0 0 20 20" fill="none"><path d="M2.5 4.5 L5 2.5 L15.5 11 L17.5 15.5 L13.5 18 L10.5 14.5Z" fill="#7db4f0" stroke="#3568b8" stroke-width="1"/><path d="M4 4 L12 12.5" stroke="#d9ecff" stroke-width="1.6"/><ellipse cx="15.3" cy="16.4" rx="2.9" ry="1.8" transform="rotate(-38 15.3 16.4)" fill="#dbeeff" stroke="#3568b8" stroke-width="0.9"/><path d="M18 4.5 L11.5 4.5 M11.5 4.5 L14 2.3 M11.5 4.5 L14 6.7" stroke="#2f63c0" stroke-width="1.4"/></svg>
<svg class="abs" style="left:687px;top:3px" width="20" height="20" viewBox="0 0 20 20" fill="none"><path d="M3 5 Q3 2 10 2 Q17 2 17 5 L17 15 Q17 18 10 18 Q3 18 3 15Z" fill="#5a96e0" stroke="#2a5ab0" stroke-width="1"/><ellipse cx="10" cy="5" rx="7" ry="2.6" fill="#9cc4f4" stroke="#2a5ab0" stroke-width="0.8"/><path d="M4.5 7 L4.5 17 L8 18 L8 8Z M12 8 L12 18 L15.5 17 L15.5 7Z" fill="#f0d020" stroke="#8a6a00" stroke-width="0.6"/><path d="M5 9 L7.5 11 M5 12 L7.5 14 M12.5 11 L15 9 M12.5 14 L15 12" stroke="#8a6a00" stroke-width="0.6"/></svg>
<svg class="abs" style="left:710px;top:3px" width="20" height="20" viewBox="0 0 20 20" fill="none"><text x="1" y="18" font-family="Liberation Serif,serif" font-weight="bold" font-size="11" fill="#4a6ad8">A</text><path d="M8 8 Q8 3 12 3 Q16 3 16 7 M6 11 Q7 15 12 15 Q17 14 17 10" stroke="#444" stroke-width="1"/><path d="M16 7 L18 5 M16 7 L13.5 6 M12 15 L14 12.6 M12 15 L14.5 16.6" stroke="#444" stroke-width="1"/></svg>
<svg class="abs" style="left:733px;top:3px" width="20" height="20" viewBox="0 0 20 20" fill="none"><path d="M2 7 L6 2 L17 2 L17 13 L13 18 L2 18Z" fill="#fff" stroke="#555" stroke-width="1"/><path d="M2 7 L13 7 L13 18Z" fill="#6aa4ec"/><path d="M2 7 L13 7 L13 18 L2 18Z" fill="#6aa4ec" stroke="#2a5ab0" stroke-width="1"/><path d="M13 7 L17 2" stroke="#555" stroke-width="1"/><path d="M9.5 2.5 L9.5 6.5 M8 4.5 L11 4.5 M14 10 L17 10 M15.5 8.5 L15.5 11.5" stroke="#d02020" stroke-width="1"/></svg>
<div class="abs" style="left:758px;top:13px;width:0;height:0;border-left:3px solid transparent;border-right:3px solid transparent;border-top:3px solid #777"></div>
<svg class="abs" style="left:770px;top:3px" width="20" height="20" viewBox="0 0 20 20" fill="none"><path d="M2 6 L6 2 L17 2 L17 13 L13 18 L2 18Z" fill="#fff" stroke="#555" stroke-width="1"/><path d="M13 6 L17 2 L17 13 L13 18Z" fill="#4a86e0" stroke="#2a5ab0" stroke-width="0.8"/><path d="M8 6 L13 6 L13 18 L8 18Z" fill="#a8c8f4"/><path d="M2 6 L13 6 L13 18" stroke="#555" stroke-width="1"/></svg>
<div class="abs" style="left:795px;top:13px;width:0;height:0;border-left:3px solid transparent;border-right:3px solid transparent;border-top:3px solid #777"></div>
<svg class="abs" style="left:807px;top:3px" width="20" height="20" viewBox="0 0 20 20" fill="none"><circle cx="6" cy="12" r="3.4" fill="#dce8f8" stroke="#6a7a9a" stroke-width="1.1"/><circle cx="14" cy="12" r="3.4" fill="#dce8f8" stroke="#6a7a9a" stroke-width="1.1"/><path d="M9 11 Q10 9.6 11 11 M4 9 Q3 4 6 3 M16 9 L18 5" stroke="#6a7a9a" stroke-width="1.1"/></svg>
<div class="abs" style="left:832px;top:13px;width:0;height:0;border-left:3px solid transparent;border-right:3px solid transparent;border-top:3px solid #777"></div>
<svg class="abs" style="left:844px;top:3px" width="20" height="20" viewBox="0 0 20 20" fill="none"><circle cx="10" cy="10" r="8" fill="#e84040"/><path d="M10 10 L2 10 A8 8 0 0 1 10 2Z" fill="#3a84e8"/><path d="M10 10 L10 18 A8 8 0 0 1 2 10Z" fill="#38b848"/><path d="M10 10 L18 10 A8 8 0 0 1 10 18Z" fill="#f4d030"/><circle cx="10" cy="10" r="8" fill="none" stroke="#888" stroke-width="0.5"/></svg>
<svg class="abs" style="left:867px;top:3px" width="20" height="20" viewBox="0 0 20 20" fill="none"><g transform="translate(3 0) scale(0.72)"><circle cx="10" cy="10" r="8" fill="#e84040"/><path d="M10 10 L2 10 A8 8 0 0 1 10 2Z" fill="#3a84e8"/><path d="M10 10 L10 18 A8 8 0 0 1 2 10Z" fill="#38b848"/><path d="M10 10 L18 10 A8 8 0 0 1 10 18Z" fill="#f4d030"/><circle cx="10" cy="10" r="8" fill="none" stroke="#888" stroke-width="0.5"/></g><path d="M2 15 L18 15 L18 19 L2 19Z" fill="#444"/><path d="M4 15 L6 17 L4 19 M8 15 L10 17 L8 19 M12 15 L14 17 L12 19 M16 15 L18 17 L16 19" stroke="#fff" stroke-width="1"/></svg>
<div class="abs" style="left:892px;top:13px;width:0;height:0;border-left:3px solid transparent;border-right:3px solid transparent;border-top:3px solid #777"></div>
<svg class="abs" style="left:904px;top:3px" width="20" height="20" viewBox="0 0 20 20" fill="none"><rect x="2" y="4" width="14" height="11" fill="#d8dce4" stroke="#555" stroke-width="1.2"/><rect x="4" y="6" width="10" height="7" fill="#fff" stroke="#888" stroke-width="0.6"/><path d="M6 18 L12 18 M9 15 L9 18" stroke="#555" stroke-width="1.2"/><path d="M9 6 L13 1 L18 2 L19 5 L14 8Z" fill="#f0c090" stroke="#8a5a2a" stroke-width="0.8"/></svg>
<div class="abs" style="left:929px;top:13px;width:0;height:0;border-left:3px solid transparent;border-right:3px solid transparent;border-top:3px solid #777"></div>
<div class="abs" style="left:1442px;top:7px;width:13px;height:13px;border:1px solid #7c7f85;border-radius:1px"></div>
<svg class="abs" style="left:1444px;top:9px" width="9" height="9" viewBox="0 0 9 9" fill="none" stroke="#7c7f85" stroke-width="1.1"><path d="M3.5 1.5 L1 4.5 L3.5 7.5"/><rect x="5" y="1.5" width="2.5" height="6"/></svg>
<div class="abs" style="left:1465px;top:7px;width:13px;height:13px;border:1px solid #7c7f85;border-radius:1px"></div>
<svg class="abs" style="left:1467px;top:9px" width="9" height="9" viewBox="0 0 9 9" fill="none" stroke="#7c7f85" stroke-width="1.1"><path d="M5.5 1.5 L8 4.5 L5.5 7.5"/><rect x="1.5" y="1.5" width="2.5" height="6"/></svg>
<div class="abs" style="left:1488px;top:15px;width:12px;height:5px;border:1px solid #7c7f85"></div>
<div class="abs" style="left:1513px;top:7px;width:11px;height:8px;border:1px solid #7c7f85;border-top-width:2px"></div>
<div class="abs" style="left:1509px;top:11px;width:11px;height:9px;border:1px solid #7c7f85;border-top-width:2px;background:#fff"></div>
<svg class="abs" style="left:1533px;top:7px" width="14" height="13" viewBox="0 0 14 13" fill="#fff" stroke="#7c7f85" stroke-width="1"><path d="M1 1 L4 1 L7 4.5 L10 1 L13 1 L8.7 6.5 L13 12 L10 12 L7 8.5 L4 12 L1 12 L5.3 6.5Z"/></svg>
<svg class="abs" style="left:13px;top:701px" width="76" height="78" viewBox="296 804 76 78">
<defs><linearGradient id="tg" x1="0" x2="1"><stop offset="0" stop-color="#0a4a0a"/><stop offset="0.45" stop-color="#2a9a2a"/><stop offset="1" stop-color="#0a4a0a"/></linearGradient>
<linearGradient id="tg2" x1="0" x2="1"><stop offset="0" stop-color="#0a5a0a"/><stop offset="0.5" stop-color="#6ad06a"/><stop offset="1" stop-color="#0a5a0a"/></linearGradient></defs>
<path d="M333.8 850 L333.8 831.5 L338.9 831.5 L338.9 850Z" fill="url(#tg)"/><path d="M331 832.6 L337.5 819 L343.4 832.6 Q337 834.5 331 832.6Z" fill="url(#tg2)"/>
<path d="M336.5 847.5 L317.5 855.6 L319.5 860.6 L338 852.5Z" fill="#1a1ac8"/><path d="M315.5 853.5 L307.2 861.5 L318.5 864.5 Q320 859 315.5 853.5Z" fill="#2a2af0"/><path d="M313 856 L309 861 L314 862Z" fill="#8a8af8"/>
<path d="M335 851.5 L350 864 L353 860 L337.5 848Z" fill="#a81414"/><path d="M347.5 866 L359.4 867.2 L355 857 Q349 859.5 347.5 866Z" fill="#d82020"/><path d="M352 863.5 L357 865.8 L354.6 860.5Z" fill="#f07070"/>
<text x="332.6" y="816.4" font-family="Liberation Serif,serif" font-size="12.5" fill="#0a7a0a">Y</text>
<text x="299.3" y="869" font-family="Liberation Serif,serif" font-size="13" fill="#1a1af0">Z</text>
<text x="357.6" y="875" font-family="Liberation Serif,serif" font-size="13" fill="#f01010">X</text>
</svg>
</div>
<div class="abs" style="left:0;top:123px;width:29px;height:484px;border-right:1px solid #a9acb2;border-bottom:1px solid #f4f5f7;box-shadow:1px 0 0 #f4f5f7"></div>
<div class="abs" style="left:30px;top:123px;width:31px;height:314px;border-right:1px solid #a9acb2;border-bottom:1px solid #f4f5f7;border-left:1px solid #f0f1f3"></div>
<div class="abs" style="left:61px;top:123px;width:29px;height:69px;border-bottom:1px solid #f4f5f7;border-left:1px solid #f0f1f3"></div>
<div class="abs" style="left:4px;top:130px;width:21px;height:2px;background:repeating-linear-gradient(90deg,#555 0 1.5px,transparent 1.5px 3px)"></div>
<div class="abs" style="left:34px;top:130px;width:21px;height:2px;background:repeating-linear-gradient(90deg,#555 0 1.5px,transparent 1.5px 3px)"></div>
<div class="abs" style="left:65px;top:130px;width:21px;height:2px;background:repeating-linear-gradient(90deg,#555 0 1.5px,transparent 1.5px 3px)"></div>
<svg class="abs" style="left:3.5px;top:140px" width="20" height="20" viewBox="0 0 20 20" fill="none" stroke="#a4a6ab" stroke-width="1.2"><path d="M3 6 L17 3 L17 14 L3 17Z" fill="#dcdee2"/></svg>
<svg class="abs" style="left:3.5px;top:162.5px" width="20" height="20" viewBox="0 0 20 20" fill="none" stroke="#a4a6ab" stroke-width="1.2"><path d="M3 3 L11 3 L11 11 L3 11Z" fill="#dcdee2"/><path d="M8 8 L17 8 L17 17 L8 17Z" fill="#dcdee2"/><path d="M3 3 L6 1 L14 1 L11 3 M14 1 L14 8"/></svg>
<svg class="abs" style="left:3.5px;top:185.5px" width="20" height="20" viewBox="0 0 20 20" fill="none" stroke="#a4a6ab" stroke-width="1.2"><ellipse cx="10" cy="12" rx="7" ry="4" fill="#dcdee2"/><path d="M5 10 Q5 2 10 2 Q15 2 15 10" fill="#dcdee2"/></svg>
<svg class="abs" style="left:3.5px;top:208px" width="20" height="20" viewBox="0 0 20 20" fill="none" stroke="#a4a6ab" stroke-width="1.2"><path d="M3 17 L3 12 Q11 12 11 3 L17 3 Q17 17 3 17Z" fill="#dcdee2"/></svg>
<svg class="abs" style="left:3.5px;top:231px" width="20" height="20" viewBox="0 0 20 20" fill="none" stroke="#a4a6ab" stroke-width="1.2"><path d="M2 10 L10 4 L18 10 L10 16Z" fill="#dcdee2"/><path d="M6 10 L10 7 L14 10 L10 13Z"/></svg>
<svg class="abs" style="left:3.5px;top:254px" width="20" height="20" viewBox="0 0 20 20" fill="none" stroke="#a4a6ab" stroke-width="1.2"><path d="M4 3 L8 3 L10 6 L12 3 L16 3 L15 9 L16 17 L4 17 L5 9Z" fill="#dcdee2"/><path d="M10 6 L10 17" stroke-dasharray="1.5 1.5"/></svg>
<div class="abs" style="left:4px;top:279px;width:20px;height:1px;background:#8e9096"></div>
<svg class="abs" style="left:3.5px;top:285px" width="20" height="20" viewBox="0 0 20 20" fill="none" stroke="#a4a6ab" stroke-width="1.2"><path d="M3 3 L15 3 L15 15 L3 15Z" fill="#dcdee2"/><path d="M3 3 L15 15" /><circle cx="9" cy="11" r="4" fill="#dcdee2"/><path d="M6 14 L2 18" stroke-width="2"/><rect x="12" y="11" width="6" height="6" fill="#dcdee2"/></svg>
<svg class="abs" style="left:3.5px;top:308px" width="20" height="20" viewBox="0 0 20 20" fill="none" stroke="#a4a6ab" stroke-width="1.2"><path d="M5 5 L13 3 L17 6 L17 12 L9 14 L5 11Z" fill="#dcdee2"/><circle cx="8" cy="11" r="4" fill="#dcdee2"/><path d="M5 14 L2 18" stroke-width="2"/></svg>
<svg class="abs" style="left:3.5px;top:331px" width="20" height="20" viewBox="0 0 20 20" fill="none" stroke="#a4a6ab" stroke-width="1.2"><path d="M10 2 L17 6 L17 14 L10 18 L3 14 L3 6Z" fill="#dcdee2"/><circle cx="9" cy="11" r="4" fill="#dcdee2"/><path d="M6 14 L2 18" stroke-width="2"/></svg>
<div class="abs" style="left:4px;top:356px;width:20px;height:1px;background:#8e9096"></div>
<svg class="abs" style="left:3.5px;top:362px" width="20" height="20" viewBox="0 0 20 20" fill="none" stroke="#a4a6ab" stroke-width="1.2"><path d="M2 5 L14 2 L18 5 L18 15 L6 18 L2 15Z" fill="#dcdee2"/><path d="M4 12 Q8 6 11 10 T17 8"/></svg>
<svg class="abs" style="left:3.5px;top:385px" width="20" height="20" viewBox="0 0 20 20" fill="none" stroke="#a4a6ab" stroke-width="1.2"><path d="M2 4 L12 4 L18 9 L18 17 L8 17 L2 12Z" fill="#c8cace"/><path d="M2 4 L8 9 L18 9 M8 9 L8 17"/></svg>
<svg class="abs" style="left:3.5px;top:408px" width="20" height="20" viewBox="0 0 20 20" fill="none" stroke="#a4a6ab" stroke-width="1.2"><path d="M6 4 L14 4 L14 12 L6 12Z" fill="#dcdee2"/><path d="M9 7 L17 7 L17 15 L9 15Z" fill="#dcdee2"/><path d="M2 12 L6 16 M6 16 L6 13 M6 16 L3 16"/></svg>
<svg class="abs" style="left:3.5px;top:432px" width="20" height="20" viewBox="0 0 20 20" fill="none" stroke="#a4a6ab" stroke-width="1.2"><path d="M3 8 L8 6 L8 17 L3 17Z M8 6 L12 3 L12 17 L8 17 M12 8 L17 8 L17 17 L12 17" fill="#dcdee2"/></svg>
<div class="abs" style="left:4px;top:456px;width:20px;height:1px;background:#8e9096"></div>
<svg class="abs" style="left:3.5px;top:463px" width="20" height="20" viewBox="0 0 20 20" fill="none" stroke="#a4a6ab" stroke-width="1.2"><path d="M3 5 L15 5 L15 15 L3 15Z" fill="#dcdee2"/><path d="M11 9 L17 2 M14 2 L15 4 M17 5 L16 3" /><path d="M9 12 L12 7 L14 9Z" fill="#c8cace"/></svg>
<svg class="abs" style="left:3.5px;top:486px" width="20" height="20" viewBox="0 0 20 20" fill="none" stroke="#a4a6ab" stroke-width="1.2"><path d="M3 8 L7 3 L13 3 L17 8 L13 14 L7 14Z" fill="#dcdee2"/><path d="M3 8 L17 8"/></svg>
<svg class="abs" style="left:3.5px;top:508px" width="20" height="20" viewBox="0 0 20 20" fill="none" stroke="#a4a6ab" stroke-width="1.2"><path d="M3 13 L10 10 L17 13 L17 16 L10 18 L3 16Z" fill="#dcdee2"/><path d="M10 2 L10 9 M7 6 L10 9 L13 6"/><ellipse cx="10" cy="12" rx="3" ry="1.3"/></svg>
<svg class="abs" style="left:3.5px;top:532px" width="20" height="20" viewBox="0 0 20 20" fill="none" stroke="#a4a6ab" stroke-width="1.2"><ellipse cx="10" cy="12" rx="7.5" ry="3" fill="#dcdee2"/><path d="M4 11 Q10 -2 16 11" fill="#dcdee2"/></svg>
<svg class="abs" style="left:3.5px;top:555px" width="20" height="20" viewBox="0 0 20 20" fill="none" stroke="#a4a6ab" stroke-width="1.2"><path d="M3 4 L17 4 L17 8 L3 8Z" fill="#c8cace"/><path d="M3 17 L10 10 L17 17" stroke-width="1.6"/><path d="M3 13 L10 7 L17 13"/></svg>
<svg class="abs" style="left:3.5px;top:578px" width="20" height="20" viewBox="0 0 20 20" fill="none" stroke="#a4a6ab" stroke-width="1.2"><path d="M2 9 L7 7 L7 14 L2 14Z" fill="#c8cace"/><path d="M8 5 L13 3 L13 17 L8 17Z M13 3 L17 5 L17 17 L13 17" fill="#dcdee2"/></svg>
<svg class="abs" style="left:34.5px;top:140px" width="20" height="20" viewBox="0 0 20 20" fill="none" stroke="#a4a6ab" stroke-width="1.2"><path d="M3 6 L13 6 L13 17 L3 17Z M3 6 L7 2 L17 2 L13 6 M17 2 L17 13 L13 17" fill="#dcdee2"/></svg>
<svg class="abs" style="left:34.5px;top:162.5px" width="20" height="20" viewBox="0 0 20 20" fill="none" stroke="#a4a6ab" stroke-width="1.2"><path d="M3 6 L13 6 L13 17 L3 17Z M3 6 L7 2 L17 2 L13 6 M17 2 L17 13 L13 17" fill="#dcdee2"/><path d="M7 2 L7 13 L3 17 M7 13 L17 13" stroke-width="1"/></svg>
<svg class="abs" style="left:34.5px;top:185.5px" width="20" height="20" viewBox="0 0 20 20" fill="none" stroke="#a4a6ab" stroke-width="1.2"><path d="M3 6 L13 6 L13 17 L3 17Z M3 6 L7 2 L17 2 L13 6 M17 2 L17 13 L13 17" fill="#dcdee2"/><path d="M7 2 L7 13 L3 17 M7 13 L17 13" stroke-width="1"/></svg>
<svg class="abs" style="left:34.5px;top:208px" width="20" height="20" viewBox="0 0 20 20" fill="none" stroke="#a4a6ab" stroke-width="1.2"><path d="M3 6 L13 6 L13 17 L3 17Z M3 6 L7 2 L17 2 L13 6 M17 2 L17 13 L13 17" fill="#dcdee2"/><path d="M7 2 L7 13 L3 17 M7 13 L17 13" stroke-width="1"/></svg>
<svg class="abs" style="left:34.5px;top:231px" width="20" height="20" viewBox="0 0 20 20" fill="none" stroke="#a4a6ab" stroke-width="1.2"><path d="M3 6 L13 6 L13 17 L3 17Z M3 6 L7 2 L17 2 L13 6 M17 2 L17 13 L13 17" fill="#dcdee2"/><path d="M7 2 L7 13 L3 17 M7 13 L17 13" stroke-width="1"/></svg>
<svg class="abs" style="left:34.5px;top:254px" width="20" height="20" viewBox="0 0 20 20" fill="none" stroke="#a4a6ab" stroke-width="1.2"><path d="M3 6 L13 6 L13 17 L3 17Z M3 6 L7 2 L17 2 L13 6 M17 2 L17 13 L13 17" fill="#dcdee2"/><path d="M7 2 L7 13 L3 17 M7 13 L17 13" stroke-width="1"/></svg>
<svg class="abs" style="left:34.5px;top:278px" width="20" height="20" viewBox="0 0 20 20" fill="none" stroke="#a4a6ab" stroke-width="1.2"><path d="M3 7 L8 3 L14 3 L17 8 L17 17 L3 17Z" fill="#dcdee2"/><path d="M8 3 L11 8 L17 8 M11 8 L3 7"/></svg>
<div class="abs" style="left:35px;top:302px;width:20px;height:1px;background:#8e9096"></div>
<svg class="abs" style="left:34.5px;top:308px" width="20" height="20" viewBox="0 0 20 20" fill="none" stroke="#a4a6ab" stroke-width="1.2"><path d="M3 3 L3 17 L10 17"/><path d="M9 13 L15 4 L17 5.5 L11 14.5 L8.5 15.5Z" fill="#dcdee2"/><path d="M6 3 L7 5 M9 2 L9 4 M5 7 L7 7" stroke-width="0.8"/></svg>
<svg class="abs" style="left:34.5px;top:331px" width="20" height="20" viewBox="0 0 20 20" fill="none" stroke="#a4a6ab" stroke-width="1.2"><path d="M2 7 L8 7 M5 4 L5 10" stroke-width="1.8"/><path d="M9 15 L15 5 L17 6.5 L11 16.5 L8.5 17.5Z" fill="#dcdee2"/></svg>
<svg class="abs" style="left:34.5px;top:354px" width="20" height="20" viewBox="0 0 20 20" fill="none" stroke="#a4a6ab" stroke-width="1.2"><path d="M6 4 L16 4 L16 12 L6 12Z" stroke-dasharray="2 1.5"/><path d="M3 9 L3 15 L9 15 M3 15 L7 11"/><circle cx="15" cy="15" r="2.2" fill="#c8cace"/></svg>
<div class="abs" style="left:35px;top:379px;width:20px;height:1px;background:#8e9096"></div>
<svg class="abs" style="left:34.5px;top:385px" width="20" height="20" viewBox="0 0 20 20" fill="none" stroke="#a4a6ab" stroke-width="1.2"><path d="M3 3 L12 3 L12 12 L3 12Z" fill="#dcdee2"/><path d="M8 8 L17 8 L17 17 L8 17Z" fill="#dcdee2"/><circle cx="10" cy="10" r="3.2"/></svg>
<svg class="abs" style="left:34.5px;top:409px" width="20" height="20" viewBox="0 0 20 20" fill="none" stroke="#a4a6ab" stroke-width="1.2"><path d="M3 3 L12 3 L12 12 L3 12Z" fill="#dcdee2"/><path d="M8 8 L17 8 L17 17 L8 17Z" fill="#dcdee2"/><path d="M8 8 L12 8 L12 12 L8 12Z" fill="#c8cace"/></svg>
<svg class="abs" style="left:65px;top:140px" width="20" height="20" viewBox="0 0 20 20" fill="none" stroke="#a4a6ab" stroke-width="1.2"><path d="M3 16 L8 16 L8 10 L12 10 L12 5 L15 5" stroke="#9a9ca0" stroke-width="1.6"/><rect x="13.5" y="2.5" width="4" height="4" stroke="#9a9ca0"/></svg>
<svg class="abs" style="left:65px;top:163px" width="20" height="20" viewBox="0 0 20 20" fill="none" stroke="#a4a6ab" stroke-width="1.2"><path d="M2 13 L7 13 L7 8 L13 8 L13 13 L18 13" stroke="#8a8c90" stroke-width="1.8"/></svg>
<div id="fm">
<div class="abs" style="left:0;top:0;width:191px;height:2px;background:#9aa0c8"></div>
<div class="abs" style="left:0;top:28px;width:191px;height:2px;background:#444"></div>
<div class="abs" style="left:1px;top:8px;width:27px;height:23px;background:#e2e5ea;border:1px solid #555;border-bottom:none;border-left-color:#fff;border-top-color:#fff"></div>
<div class="abs" style="left:29px;top:9px;width:28px;height:20px;background:#a6a6aa;border:1px solid #444"></div>
<div class="abs" style="left:57px;top:9px;width:28px;height:20px;background:#a6a6aa;border:1px solid #444"></div>
<div class="abs" style="left:85px;top:9px;width:28px;height:20px;background:#a6a6aa;border:1px solid #444"></div>
<div class="abs" style="left:113px;top:9px;width:28px;height:20px;background:#a6a6aa;border:1px solid #444"></div>
<svg class="abs" style="left:6px;top:10px" width="17" height="17" viewBox="0 0 17 17"><path d="M1 3 L5 1.2 L8.5 3 L8.5 5 L15.5 9 L15.5 12.5 L11.5 15.8 L1 6Z" fill="#f5d400" stroke="#000" stroke-width="1.3" stroke-linejoin="round"/><path d="M1 3 L4.6 5 L8.5 3 M4.6 5 L4.6 7.8 L11.5 12 L15.5 9 M11.5 12 L11.5 15.8" fill="none" stroke="#000" stroke-width="1.1" stroke-linejoin="round"/><path d="M4.6 8.2 L11 12.4 L11 14.6 L2 6.4 Z" fill="#c89a00"/><path d="M7.5 5.2 L11.5 3.4 L15.8 5.2 L15.8 10 L11.8 12.4 L7.5 10Z" fill="#12a812" stroke="#000" stroke-width="1.2" stroke-linejoin="round"/><path d="M7.5 5.2 L11.8 7.2 L15.8 5.2 M11.8 7.2 L11.8 12.4" fill="none" stroke="#000" stroke-width="1"/><path d="M8.8 5.3 L11.5 4.1 L14.4 5.3 L11.8 6.5Z" fill="#9cf59c"/><path d="M12.5 7.8 L15 6.5 L15 9.4 L12.5 10.8Z" fill="#0a7a0a"/></svg>
<svg class="abs" style="left:34px;top:11px" width="18" height="17" viewBox="0 0 18 17"><rect x="2" y="5" width="11" height="11" fill="#fff" stroke="#46609a" stroke-width="1"/><rect x="4" y="8" width="3" height="2" fill="#888"/><path d="M4 12.5 L11 12.5 M8 9 L11 9" stroke="#888"/><path d="M7 5 L11 1 L16 2 L17 5 L13 7Z" fill="#f0c090" stroke="#8a5a2a" stroke-width="0.8"/></svg>
<svg class="abs" style="left:62px;top:11px" width="18" height="17" viewBox="0 0 18 17"><path d="M3 0 L3 16 M3 4.5 L9 4.5 M3 12.5 L11 12.5" stroke="#222" stroke-width="1.2" fill="none"/><rect x="8" y="2" width="5" height="5" rx="1" fill="#ffd21a" stroke="#222" stroke-width="1"/><rect x="10.5" y="10" width="5" height="5" rx="1" fill="#ffd21a" stroke="#222" stroke-width="1"/></svg>
<svg class="abs" style="left:90px;top:11px" width="18" height="17" viewBox="0 0 18 17"><circle cx="9" cy="8.5" r="5" fill="none" stroke="#c030e0" stroke-width="1.5"/><path d="M9 0.5 L9 16.5 M1 8.5 L17 8.5" stroke="#c030e0" stroke-width="1.5"/></svg>
<svg class="abs" style="left:118px;top:11px" width="18" height="17" viewBox="0 0 18 17"><circle cx="9" cy="8.5" r="7.5" fill="#e02020"/><path d="M9 8.5 L1.5 8.5 A7.5 7.5 0 0 0 9 16Z" fill="#2060e0"/><path d="M9 8.5 L9 16 A7.5 7.5 0 0 0 16.5 8.5Z" fill="#f0d020"/><path d="M9 8.5 L1.5 8.5 A7.5 7.5 0 0 1 5 2.2Z" fill="#20b040"/><ellipse cx="12.5" cy="5.5" rx="2.4" ry="3.6" fill="#111" transform="rotate(-30 12.5 5.5)"/></svg>
<div class="abs" style="left:176px;top:8px;font-size:17px;line-height:20px;color:#111">»</div>
<div class="abs" style="left:1px;top:31px;width:191px;height:18px;background:#ececec;border:1px solid #555;border-radius:2px"></div>
<svg class="abs" style="left:8px;top:34px" width="24" height="13" viewBox="0 0 24 13"><path d="M1 1 L11 1 L7.2 5.6 L7.2 11.5 L4.8 11.5 L4.8 5.6Z" fill="#3aa0f0" stroke="#1530c0" stroke-width="1"/><path d="M15 4.5 L22 4.5 L18.5 8.5Z" fill="#333"/></svg>
<div class="abs" style="left:0;top:51px;width:174px;height:721px;overflow:hidden">
<div class="abs" style="left:10px;top:22px;width:0;height:720px;border-left:1px dotted #666"></div>
<div class="trow warn" style="top:2px;width:174px"><svg class="abs" style="left:2px;top:1px" width="17" height="17" viewBox="0 0 17 17"><path d="M1 3 L5 1.2 L8.5 3 L8.5 5 L15.5 9 L15.5 12.5 L11.5 15.8 L1 6Z" fill="#f5d400" stroke="#000" stroke-width="1.3" stroke-linejoin="round"/><path d="M1 3 L4.6 5 L8.5 3 M4.6 5 L4.6 7.8 L11.5 12 L15.5 9 M11.5 12 L11.5 15.8" fill="none" stroke="#000" stroke-width="1.1" stroke-linejoin="round"/><path d="M4.6 8.2 L11 12.4 L11 14.6 L2 6.4 Z" fill="#c89a00"/><path d="M7.5 5.2 L11.5 3.4 L15.8 5.2 L15.8 10 L11.8 12.4 L7.5 10Z" fill="#12a812" stroke="#000" stroke-width="1.2" stroke-linejoin="round"/><path d="M7.5 5.2 L11.8 7.2 L15.8 5.2 M11.8 7.2 L11.8 12.4" fill="none" stroke="#000" stroke-width="1"/><path d="M8.8 5.3 L11.5 4.1 L14.4 5.3 L11.8 6.5Z" fill="#9cf59c"/><path d="M12.5 7.8 L15 6.5 L15 9.4 L12.5 10.8Z" fill="#0a7a0a"/></svg><svg class="abs" style="left:20px;top:4px" width="15" height="14" viewBox="0 0 15 14"><path d="M7.5 1 L14 13 L1 13Z" fill="#ffe81a" stroke="#222" stroke-width="1.1" stroke-linejoin="round"/><path d="M7.5 4 L7.5 10" stroke="#000" stroke-width="1.6"/><path d="M4.8 8.3 L7.5 11.6 L10.2 8.3Z" fill="#000"/></svg><span class="tx" style="left:40px">黑鹰直升机&nbsp; (默认&lt;默认</span></div>
<div class="trow" style="top:24px;width:174px"><div class="abs" style="left:11px;top:11px;width:10px;height:0;border-top:1px dotted #666"></div><svg class="abs" style="left:21px;top:2px" width="17" height="16" viewBox="0 0 17 16"><path d="M1 2.5 L2 1 L7 1 L8 2.5 L16 2.5 L16 15 L1 15Z" fill="#f9cf4a" stroke="#b8860b" stroke-width="1"/><path d="M1.6 4 L15.4 4" stroke="#fde9a0" stroke-width="1"/><circle cx="8.5" cy="9.2" r="4.4" fill="#fff" stroke="#2a3fd0" stroke-width="1.3"/><path d="M8.5 6.5 L8.5 9.4 L10.8 9.4" fill="none" stroke="#d01010" stroke-width="1.1"/><path d="M3 6.5 Q6 2.2 12.5 4.2" fill="none" stroke="#1f9a1f" stroke-width="1.4"/><path d="M2 3.8 L5.6 5.6 L2.6 7.8Z" fill="#1f9a1f"/></svg><span class="tx" style="left:43px">History</span></div>
<div class="trow" style="top:46px;width:174px"><div class="abs" style="left:11px;top:11px;width:10px;height:0;border-top:1px dotted #666"></div><svg class="abs" style="left:21px;top:2px" width="17" height="16" viewBox="0 0 17 16"><path d="M1 2.5 L2 1 L7 1 L8 2.5 L16 2.5 L16 15 L1 15Z" fill="#f9cf4a" stroke="#b8860b" stroke-width="1"/><path d="M1.6 4 L15.4 4" stroke="#fde9a0" stroke-width="1"/><circle cx="8.5" cy="9.2" r="4.6" fill="#fff" stroke="#222" stroke-width="1.1" stroke-dasharray="1.6 0.9"/><circle cx="8.5" cy="9.2" r="3.1" fill="#fff" stroke="none"/><path d="M6.5 11.5 L10.8 6.6" stroke="#2a6ae0" stroke-width="1.5"/></svg><span class="tx" style="left:43px">传感器</span></div>
<div class="trow" style="top:68px;width:174px"><div class="abs" style="left:16px;top:11px;width:4px;height:0;border-top:1px dotted #666"></div><div class="abs" style="left:5px;top:6px;width:11px;height:11px;border:1px solid #8c8f96;border-radius:2px;background:linear-gradient(#fff,#d9dbdf)"></div><div class="abs" style="left:7px;top:11px;width:7px;height:1px;background:#2a3a8c"></div><div class="abs" style="left:10px;top:8px;width:1px;height:7px;background:#2a3a8c"></div><svg class="abs" style="left:21px;top:2px" width="17" height="16" viewBox="0 0 17 16"><path d="M1 2.5 L2 1 L7 1 L8 2.5 L16 2.5 L16 15 L1 15Z" fill="#f9cf4a" stroke="#b8860b" stroke-width="1"/><path d="M1.6 4 L15.4 4" stroke="#fde9a0" stroke-width="1"/><text x="8.5" y="13.2" font-family="Liberation Serif,serif" font-weight="bold" font-size="12.5" fill="#1a2ad8" text-anchor="middle">A</text></svg><span class="tx" style="left:43px">注解</span></div>
<div class="trow" style="top:90px;width:174px"><div class="abs" style="left:11px;top:11px;width:10px;height:0;border-top:1px dotted #666"></div><svg class="abs" style="left:21px;top:2px" width="17" height="16" viewBox="0 0 17 16"><path d="M1.5 7 L8 1.2 L15 8.5 L8.5 14.5Z" fill="#f4f6fa" stroke="#111" stroke-width="1"/><path d="M2 0.8 L5 4.2 M11.8 11.8 L15 15.4" stroke="#111" stroke-width="1"/></svg><span class="tx" style="left:43px">前视基准面</span></div>
<div class="trow" style="top:112px;width:174px"><div class="abs" style="left:11px;top:11px;width:10px;height:0;border-top:1px dotted #666"></div><svg class="abs" style="left:21px;top:2px" width="17" height="16" viewBox="0 0 17 16"><path d="M1.5 7 L8 1.2 L15 8.5 L8.5 14.5Z" fill="#f4f6fa" stroke="#111" stroke-width="1"/><path d="M2 0.8 L5 4.2 M11.8 11.8 L15 15.4" stroke="#111" stroke-width="1"/></svg><span class="tx" style="left:43px">上视基准面</span></div>
<div class="trow" style="top:134px;width:174px"><div class="abs" style="left:11px;top:11px;width:10px;height:0;border-top:1px dotted #666"></div><svg class="abs" style="left:21px;top:2px" width="17" height="16" viewBox="0 0 17 16"><path d="M1.5 7 L8 1.2 L15 8.5 L8.5 14.5Z" fill="#f4f6fa" stroke="#111" stroke-width="1"/><path d="M2 0.8 L5 4.2 M11.8 11.8 L15 15.4" stroke="#111" stroke-width="1"/></svg><span class="tx" style="left:43px">右视基准面</span></div>
<div class="trow" style="top:156px;width:174px"><div class="abs" style="left:11px;top:11px;width:10px;height:0;border-top:1px dotted #666"></div><svg class="abs" style="left:21px;top:1px" width="17" height="17" viewBox="0 0 17 17"><path d="M4.5 13 L4.5 2.5" stroke="#c81414" stroke-width="1.2"/><path d="M2.3 4.6 L4.5 0.8 L6.7 4.6Z" fill="#c81414"/><path d="M4.5 13 L13 13" stroke="#c81414" stroke-width="1.2"/><path d="M11.6 10.8 L15.4 13 L11.6 15.2Z" fill="#c81414"/><path d="M1.5 13 L7.5 13 M4.5 10 L4.5 16 M2.4 10.9 L6.6 15.1 M6.6 10.9 L2.4 15.1" stroke="#111" stroke-width="0.9"/></svg><span class="tx" style="left:43px">原点</span></div>
<div class="trow" style="top:178px;width:174px"><div class="abs" style="left:16px;top:11px;width:4px;height:0;border-top:1px dotted #666"></div><div class="abs" style="left:5px;top:6px;width:11px;height:11px;border:1px solid #8c8f96;border-radius:2px;background:linear-gradient(#fff,#d9dbdf)"></div><div class="abs" style="left:7px;top:11px;width:7px;height:1px;background:#2a3a8c"></div><div class="abs" style="left:10px;top:8px;width:1px;height:7px;background:#2a3a8c"></div><svg class="abs" style="left:21px;top:1px" width="17" height="16" viewBox="0 0 17 16"><path d="M1 2.5 L5 0.8 L8.5 2.5 L8.5 4.8 L12 6.5 L15.5 8.2 L15.5 12 L11.5 14.8 L1 5.5Z" fill="#f5d400" stroke="#000" stroke-width="1.3" stroke-linejoin="round"/><path d="M1 2.5 L4.6 4.4 L8.5 2.5 M4.6 4.4 L4.6 7.2 L11.5 11 L15.5 8.2 M11.5 11 L11.5 14.8 M8.5 4.8 L7 6 L8.2 8.6" fill="none" stroke="#000" stroke-width="1.1" stroke-linejoin="round"/><path d="M4.6 7.6 L11 11.4 L11 13.6 L2 5.8 Z" fill="#c89a00" stroke="none"/></svg><span class="tx" style="left:42px">(-) 操作面板<span style="letter-spacing:1.4px">&lt;1&gt;</span> (默认&lt;</span></div>
<div class="trow" style="top:200px;width:174px"><div class="abs" style="left:16px;top:11px;width:4px;height:0;border-top:1px dotted #666"></div><div class="abs" style="left:5px;top:6px;width:11px;height:11px;border:1px solid #8c8f96;border-radius:2px;background:linear-gradient(#fff,#d9dbdf)"></div><div class="abs" style="left:7px;top:11px;width:7px;height:1px;background:#2a3a8c"></div><div class="abs" style="left:10px;top:8px;width:1px;height:7px;background:#2a3a8c"></div><svg class="abs" style="left:21px;top:1px" width="17" height="16" viewBox="0 0 17 16"><path d="M1 2.5 L5 0.8 L8.5 2.5 L8.5 4.8 L12 6.5 L15.5 8.2 L15.5 12 L11.5 14.8 L1 5.5Z" fill="#f5d400" stroke="#000" stroke-width="1.3" stroke-linejoin="round"/><path d="M1 2.5 L4.6 4.4 L8.5 2.5 M4.6 4.4 L4.6 7.2 L11.5 11 L15.5 8.2 M11.5 11 L11.5 14.8 M8.5 4.8 L7 6 L8.2 8.6" fill="none" stroke="#000" stroke-width="1.1" stroke-linejoin="round"/><path d="M4.6 7.6 L11 11.4 L11 13.6 L2 5.8 Z" fill="#c89a00" stroke="none"/></svg><span class="tx" style="left:42px">(-) 后轮<span style="letter-spacing:1.4px">&lt;1&gt;</span> (默认&lt;</span></div>
<div class="trow" style="top:222px;width:174px"><div class="abs" style="left:16px;top:11px;width:4px;height:0;border-top:1px dotted #666"></div><div class="abs" style="left:5px;top:6px;width:11px;height:11px;border:1px solid #8c8f96;border-radius:2px;background:linear-gradient(#fff,#d9dbdf)"></div><div class="abs" style="left:7px;top:11px;width:7px;height:1px;background:#2a3a8c"></div><div class="abs" style="left:10px;top:8px;width:1px;height:7px;background:#2a3a8c"></div><svg class="abs" style="left:21px;top:1px" width="17" height="16" viewBox="0 0 17 16"><path d="M1 2.5 L5 0.8 L8.5 2.5 L8.5 4.8 L12 6.5 L15.5 8.2 L15.5 12 L11.5 14.8 L1 5.5Z" fill="#f5d400" stroke="#000" stroke-width="1.3" stroke-linejoin="round"/><path d="M1 2.5 L4.6 4.4 L8.5 2.5 M4.6 4.4 L4.6 7.2 L11.5 11 L15.5 8.2 M11.5 11 L11.5 14.8 M8.5 4.8 L7 6 L8.2 8.6" fill="none" stroke="#000" stroke-width="1.1" stroke-linejoin="round"/><path d="M4.6 7.6 L11 11.4 L11 13.6 L2 5.8 Z" fill="#c89a00" stroke="none"/></svg><span class="tx" style="left:42px">(-) 尾翼<span style="letter-spacing:1.4px">&lt;1&gt;</span> (默认&lt;</span></div>
<div class="trow" style="top:244px;width:174px"><div class="abs" style="left:16px;top:11px;width:4px;height:0;border-top:1px dotted #666"></div><div class="abs" style="left:5px;top:6px;width:11px;height:11px;border:1px solid #8c8f96;border-radius:2px;background:linear-gradient(#fff,#d9dbdf)"></div><div class="abs" style="left:7px;top:11px;width:7px;height:1px;background:#2a3a8c"></div><div class="abs" style="left:10px;top:8px;width:1px;height:7px;background:#2a3a8c"></div><svg class="abs" style="left:21px;top:1px" width="17" height="16" viewBox="0 0 17 16"><path d="M1 2.5 L5 0.8 L8.5 2.5 L8.5 4.8 L12 6.5 L15.5 8.2 L15.5 12 L11.5 14.8 L1 5.5Z" fill="#f5d400" stroke="#000" stroke-width="1.3" stroke-linejoin="round"/><path d="M1 2.5 L4.6 4.4 L8.5 2.5 M4.6 4.4 L4.6 7.2 L11.5 11 L15.5 8.2 M11.5 11 L11.5 14.8 M8.5 4.8 L7 6 L8.2 8.6" fill="none" stroke="#000" stroke-width="1.1" stroke-linejoin="round"/><path d="M4.6 7.6 L11 11.4 L11 13.6 L2 5.8 Z" fill="#c89a00" stroke="none"/></svg><span class="tx" style="left:42px">(-) 左天线<span style="letter-spacing:1.4px">&lt;1&gt;</span> (默认&lt;</span></div>
<div class="trow" style="top:266px;width:174px"><div class="abs" style="left:16px;top:11px;width:4px;height:0;border-top:1px dotted #666"></div><div class="abs" style="left:5px;top:6px;width:11px;height:11px;border:1px solid #8c8f96;border-radius:2px;background:linear-gradient(#fff,#d9dbdf)"></div><div class="abs" style="left:7px;top:11px;width:7px;height:1px;background:#2a3a8c"></div><div class="abs" style="left:10px;top:8px;width:1px;height:7px;background:#2a3a8c"></div><svg class="abs" style="left:21px;top:1px" width="17" height="16" viewBox="0 0 17 16"><path d="M1 2.5 L5 0.8 L8.5 2.5 L8.5 4.8 L12 6.5 L15.5 8.2 L15.5 12 L11.5 14.8 L1 5.5Z" fill="#f5d400" stroke="#000" stroke-width="1.3" stroke-linejoin="round"/><path d="M1 2.5 L4.6 4.4 L8.5 2.5 M4.6 4.4 L4.6 7.2 L11.5 11 L15.5 8.2 M11.5 11 L11.5 14.8 M8.5 4.8 L7 6 L8.2 8.6" fill="none" stroke="#000" stroke-width="1.1" stroke-linejoin="round"/><path d="M4.6 7.6 L11 11.4 L11 13.6 L2 5.8 Z" fill="#c89a00" stroke="none"/></svg><span class="tx" style="left:42px">(-) 前起落架<span style="letter-spacing:1.4px">&lt;1&gt;</span> (默认&lt;</span></div>
<div class="trow warn" style="top:288px;width:174px"><div class="abs" style="left:16px;top:11px;width:4px;height:0;border-top:1px dotted #666"></div><div class="abs" style="left:5px;top:6px;width:11px;height:11px;border:1px solid #8c8f96;border-radius:2px;background:linear-gradient(#fff,#d9dbdf)"></div><div class="abs" style="left:7px;top:11px;width:7px;height:1px;background:#2a3a8c"></div><div class="abs" style="left:10px;top:8px;width:1px;height:7px;background:#2a3a8c"></div><svg class="abs" style="left:21px;top:1px" width="17" height="16" viewBox="0 0 17 16"><path d="M1 2.5 L5 0.8 L8.5 2.5 L8.5 4.8 L12 6.5 L15.5 8.2 L15.5 12 L11.5 14.8 L1 5.5Z" fill="#f5d400" stroke="#000" stroke-width="1.3" stroke-linejoin="round"/><path d="M1 2.5 L4.6 4.4 L8.5 2.5 M4.6 4.4 L4.6 7.2 L11.5 11 L15.5 8.2 M11.5 11 L11.5 14.8 M8.5 4.8 L7 6 L8.2 8.6" fill="none" stroke="#000" stroke-width="1.1" stroke-linejoin="round"/><path d="M4.6 7.6 L11 11.4 L11 13.6 L2 5.8 Z" fill="#c89a00" stroke="none"/></svg><svg class="abs" style="left:40px;top:3px" width="15" height="14" viewBox="0 0 15 14"><path d="M7.5 1 L14 13 L1 13Z" fill="#ffe81a" stroke="#222" stroke-width="1.1" stroke-linejoin="round"/><path d="M7.5 4.5 L7.5 9.2" stroke="#000" stroke-width="1.8"/><rect x="6.6" y="10.2" width="1.8" height="1.7" fill="#000"/></svg><span class="tx" style="left:59px">(-) 尾旋翼<span style="letter-spacing:1.4px">&lt;1&gt;</span> (默认&lt;</span></div>
<div class="trow" style="top:310px;width:174px"><div class="abs" style="left:16px;top:11px;width:4px;height:0;border-top:1px dotted #666"></div><div class="abs" style="left:5px;top:6px;width:11px;height:11px;border:1px solid #8c8f96;border-radius:2px;background:linear-gradient(#fff,#d9dbdf)"></div><div class="abs" style="left:7px;top:11px;width:7px;height:1px;background:#2a3a8c"></div><div class="abs" style="left:10px;top:8px;width:1px;height:7px;background:#2a3a8c"></div><svg class="abs" style="left:21px;top:1px" width="17" height="16" viewBox="0 0 17 16"><path d="M1 2.5 L5 0.8 L8.5 2.5 L8.5 4.8 L12 6.5 L15.5 8.2 L15.5 12 L11.5 14.8 L1 5.5Z" fill="#f5d400" stroke="#000" stroke-width="1.3" stroke-linejoin="round"/><path d="M1 2.5 L4.6 4.4 L8.5 2.5 M4.6 4.4 L4.6 7.2 L11.5 11 L15.5 8.2 M11.5 11 L11.5 14.8 M8.5 4.8 L7 6 L8.2 8.6" fill="none" stroke="#000" stroke-width="1.1" stroke-linejoin="round"/><path d="M4.6 7.6 L11 11.4 L11 13.6 L2 5.8 Z" fill="#c89a00" stroke="none"/></svg><span class="tx" style="left:42px">(-) 右天线<span style="letter-spacing:1.4px">&lt;1&gt;</span> (默认&lt;</span></div>
<div class="trow" style="top:332px;width:174px"><div class="abs" style="left:16px;top:11px;width:4px;height:0;border-top:1px dotted #666"></div><div class="abs" style="left:5px;top:6px;width:11px;height:11px;border:1px solid #8c8f96;border-radius:2px;background:linear-gradient(#fff,#d9dbdf)"></div><div class="abs" style="left:7px;top:11px;width:7px;height:1px;background:#2a3a8c"></div><div class="abs" style="left:10px;top:8px;width:1px;height:7px;background:#2a3a8c"></div><svg class="abs" style="left:21px;top:1px" width="17" height="16" viewBox="0 0 17 16"><path d="M1 2.5 L5 0.8 L8.5 2.5 L8.5 4.8 L12 6.5 L15.5 8.2 L15.5 12 L11.5 14.8 L1 5.5Z" fill="#f5d400" stroke="#000" stroke-width="1.3" stroke-linejoin="round"/><path d="M1 2.5 L4.6 4.4 L8.5 2.5 M4.6 4.4 L4.6 7.2 L11.5 11 L15.5 8.2 M11.5 11 L11.5 14.8 M8.5 4.8 L7 6 L8.2 8.6" fill="none" stroke="#000" stroke-width="1.1" stroke-linejoin="round"/><path d="M4.6 7.6 L11 11.4 L11 13.6 L2 5.8 Z" fill="#c89a00" stroke="none"/></svg><span class="tx" style="left:42px">(-) 前起落架<span style="letter-spacing:1.4px">&lt;2&gt;</span> (默认&lt;</span></div>
<div class="trow" style="top:354px;width:174px"><div class="abs" style="left:16px;top:11px;width:4px;height:0;border-top:1px dotted #666"></div><div class="abs" style="left:5px;top:6px;width:11px;height:11px;border:1px solid #8c8f96;border-radius:2px;background:linear-gradient(#fff,#d9dbdf)"></div><div class="abs" style="left:7px;top:11px;width:7px;height:1px;background:#2a3a8c"></div><div class="abs" style="left:10px;top:8px;width:1px;height:7px;background:#2a3a8c"></div><svg class="abs" style="left:21px;top:1px" width="17" height="16" viewBox="0 0 17 16"><path d="M1 2.5 L5 0.8 L8.5 2.5 L8.5 4.8 L12 6.5 L15.5 8.2 L15.5 12 L11.5 14.8 L1 5.5Z" fill="#f5d400" stroke="#000" stroke-width="1.3" stroke-linejoin="round"/><path d="M1 2.5 L4.6 4.4 L8.5 2.5 M4.6 4.4 L4.6 7.2 L11.5 11 L15.5 8.2 M11.5 11 L11.5 14.8 M8.5 4.8 L7 6 L8.2 8.6" fill="none" stroke="#000" stroke-width="1.1" stroke-linejoin="round"/><path d="M4.6 7.6 L11 11.4 L11 13.6 L2 5.8 Z" fill="#c89a00" stroke="none"/></svg><span class="tx" style="left:42px">(-) 左舱门<span style="letter-spacing:1.4px">&lt;1&gt;</span> (默认&lt;</span></div>
<div class="trow" style="top:376px;width:174px"><div class="abs" style="left:16px;top:11px;width:4px;height:0;border-top:1px dotted #666"></div><div class="abs" style="left:5px;top:6px;width:11px;height:11px;border:1px solid #8c8f96;border-radius:2px;background:linear-gradient(#fff,#d9dbdf)"></div><div class="abs" style="left:7px;top:11px;width:7px;height:1px;background:#2a3a8c"></div><div class="abs" style="left:10px;top:8px;width:1px;height:7px;background:#2a3a8c"></div><svg class="abs" style="left:21px;top:1px" width="17" height="16" viewBox="0 0 17 16"><path d="M1 2.5 L5 0.8 L8.5 2.5 L8.5 4.8 L12 6.5 L15.5 8.2 L15.5 12 L11.5 14.8 L1 5.5Z" fill="#f5d400" stroke="#000" stroke-width="1.3" stroke-linejoin="round"/><path d="M1 2.5 L4.6 4.4 L8.5 2.5 M4.6 4.4 L4.6 7.2 L11.5 11 L15.5 8.2 M11.5 11 L11.5 14.8 M8.5 4.8 L7 6 L8.2 8.6" fill="none" stroke="#000" stroke-width="1.1" stroke-linejoin="round"/><path d="M4.6 7.6 L11 11.4 L11 13.6 L2 5.8 Z" fill="#c89a00" stroke="none"/></svg><span class="tx" style="left:42px">(-) M24底座<span style="letter-spacing:1.4px">&lt;1&gt;</span> (默认&lt;</span></div>
<div class="trow" style="top:398px;width:174px"><div class="abs" style="left:16px;top:11px;width:4px;height:0;border-top:1px dotted #666"></div><div class="abs" style="left:5px;top:6px;width:11px;height:11px;border:1px solid #8c8f96;border-radius:2px;background:linear-gradient(#fff,#d9dbdf)"></div><div class="abs" style="left:7px;top:11px;width:7px;height:1px;background:#2a3a8c"></div><div class="abs" style="left:10px;top:8px;width:1px;height:7px;background:#2a3a8c"></div><svg class="abs" style="left:21px;top:1px" width="17" height="16" viewBox="0 0 17 16"><path d="M1 2.5 L5 0.8 L8.5 2.5 L8.5 4.8 L12 6.5 L15.5 8.2 L15.5 12 L11.5 14.8 L1 5.5Z" fill="#f5d400" stroke="#000" stroke-width="1.3" stroke-linejoin="round"/><path d="M1 2.5 L4.6 4.4 L8.5 2.5 M4.6 4.4 L4.6 7.2 L11.5 11 L15.5 8.2 M11.5 11 L11.5 14.8 M8.5 4.8 L7 6 L8.2 8.6" fill="none" stroke="#000" stroke-width="1.1" stroke-linejoin="round"/><path d="M4.6 7.6 L11 11.4 L11 13.6 L2 5.8 Z" fill="#c89a00" stroke="none"/></svg><span class="tx" style="left:42px">(-) 前轮<span style="letter-spacing:1.4px">&lt;1&gt;</span> (默认&lt;</span></div>
<div class="trow" style="top:420px;width:174px"><div class="abs" style="left:16px;top:11px;width:4px;height:0;border-top:1px dotted #666"></div><div class="abs" style="left:5px;top:6px;width:11px;height:11px;border:1px solid #8c8f96;border-radius:2px;background:linear-gradient(#fff,#d9dbdf)"></div><div class="abs" style="left:7px;top:11px;width:7px;height:1px;background:#2a3a8c"></div><div class="abs" style="left:10px;top:8px;width:1px;height:7px;background:#2a3a8c"></div><svg class="abs" style="left:21px;top:1px" width="17" height="16" viewBox="0 0 17 16"><path d="M1 2.5 L5 0.8 L8.5 2.5 L8.5 4.8 L12 6.5 L15.5 8.2 L15.5 12 L11.5 14.8 L1 5.5Z" fill="#f5d400" stroke="#000" stroke-width="1.3" stroke-linejoin="round"/><path d="M1 2.5 L4.6 4.4 L8.5 2.5 M4.6 4.4 L4.6 7.2 L11.5 11 L15.5 8.2 M11.5 11 L11.5 14.8 M8.5 4.8 L7 6 L8.2 8.6" fill="none" stroke="#000" stroke-width="1.1" stroke-linejoin="round"/><path d="M4.6 7.6 L11 11.4 L11 13.6 L2 5.8 Z" fill="#c89a00" stroke="none"/></svg><span class="tx" style="left:42px">(-) 右舱门<span style="letter-spacing:1.4px">&lt;1&gt;</span> (默认&lt;</span></div>
<div class="trow" style="top:442px;width:174px"><div class="abs" style="left:16px;top:11px;width:4px;height:0;border-top:1px dotted #666"></div><div class="abs" style="left:5px;top:6px;width:11px;height:11px;border:1px solid #8c8f96;border-radius:2px;background:linear-gradient(#fff,#d9dbdf)"></div><div class="abs" style="left:7px;top:11px;width:7px;height:1px;background:#2a3a8c"></div><div class="abs" style="left:10px;top:8px;width:1px;height:7px;background:#2a3a8c"></div><svg class="abs" style="left:21px;top:1px" width="17" height="16" viewBox="0 0 17 16"><path d="M1 2.5 L5 0.8 L8.5 2.5 L8.5 4.8 L12 6.5 L15.5 8.2 L15.5 12 L11.5 14.8 L1 5.5Z" fill="#f5d400" stroke="#000" stroke-width="1.3" stroke-linejoin="round"/><path d="M1 2.5 L4.6 4.4 L8.5 2.5 M4.6 4.4 L4.6 7.2 L11.5 11 L15.5 8.2 M11.5 11 L11.5 14.8 M8.5 4.8 L7 6 L8.2 8.6" fill="none" stroke="#000" stroke-width="1.1" stroke-linejoin="round"/><path d="M4.6 7.6 L11 11.4 L11 13.6 L2 5.8 Z" fill="#c89a00" stroke="none"/></svg><span class="tx" style="left:42px">(-) M24<span style="letter-spacing:1.4px">&lt;1&gt;</span> (默认&lt;</span></div>
<div class="trow" style="top:464px;width:174px"><div class="abs" style="left:16px;top:11px;width:4px;height:0;border-top:1px dotted #666"></div><div class="abs" style="left:5px;top:6px;width:11px;height:11px;border:1px solid #8c8f96;border-radius:2px;background:linear-gradient(#fff,#d9dbdf)"></div><div class="abs" style="left:7px;top:11px;width:7px;height:1px;background:#2a3a8c"></div><div class="abs" style="left:10px;top:8px;width:1px;height:7px;background:#2a3a8c"></div><svg class="abs" style="left:21px;top:1px" width="17" height="16" viewBox="0 0 17 16"><path d="M1 2.5 L5 0.8 L8.5 2.5 L8.5 4.8 L12 6.5 L15.5 8.2 L15.5 12 L11.5 14.8 L1 5.5Z" fill="#f5d400" stroke="#000" stroke-width="1.3" stroke-linejoin="round"/><path d="M1 2.5 L4.6 4.4 L8.5 2.5 M4.6 4.4 L4.6 7.2 L11.5 11 L15.5 8.2 M11.5 11 L11.5 14.8 M8.5 4.8 L7 6 L8.2 8.6" fill="none" stroke="#000" stroke-width="1.1" stroke-linejoin="round"/><path d="M4.6 7.6 L11 11.4 L11 13.6 L2 5.8 Z" fill="#c89a00" stroke="none"/></svg><span class="tx" style="left:42px">(-) 前轮<span style="letter-spacing:1.4px">&lt;2&gt;</span> (默认&lt;</span></div>
<div class="trow" style="top:486px;width:174px"><div class="abs" style="left:16px;top:11px;width:4px;height:0;border-top:1px dotted #666"></div><div class="abs" style="left:5px;top:6px;width:11px;height:11px;border:1px solid #8c8f96;border-radius:2px;background:linear-gradient(#fff,#d9dbdf)"></div><div class="abs" style="left:7px;top:11px;width:7px;height:1px;background:#2a3a8c"></div><div class="abs" style="left:10px;top:8px;width:1px;height:7px;background:#2a3a8c"></div><svg class="abs" style="left:21px;top:1px" width="17" height="16" viewBox="0 0 17 16"><path d="M1 2.5 L5 0.8 L8.5 2.5 L8.5 4.8 L12 6.5 L15.5 8.2 L15.5 12 L11.5 14.8 L1 5.5Z" fill="#f5d400" stroke="#000" stroke-width="1.3" stroke-linejoin="round"/><path d="M1 2.5 L4.6 4.4 L8.5 2.5 M4.6 4.4 L4.6 7.2 L11.5 11 L15.5 8.2 M11.5 11 L11.5 14.8 M8.5 4.8 L7 6 L8.2 8.6" fill="none" stroke="#000" stroke-width="1.1" stroke-linejoin="round"/><path d="M4.6 7.6 L11 11.4 L11 13.6 L2 5.8 Z" fill="#c89a00" stroke="none"/></svg><span class="tx" style="left:42px">(-) 前舷窗<span style="letter-spacing:1.4px">&lt;1&gt;</span> (默认&lt;</span></div>
<div class="trow" style="top:508px;width:174px"><div class="abs" style="left:16px;top:11px;width:4px;height:0;border-top:1px dotted #666"></div><div class="abs" style="left:5px;top:6px;width:11px;height:11px;border:1px solid #8c8f96;border-radius:2px;background:linear-gradient(#fff,#d9dbdf)"></div><div class="abs" style="left:7px;top:11px;width:7px;height:1px;background:#2a3a8c"></div><div class="abs" style="left:10px;top:8px;width:1px;height:7px;background:#2a3a8c"></div><svg class="abs" style="left:21px;top:1px" width="17" height="16" viewBox="0 0 17 16"><path d="M1 2.5 L5 0.8 L8.5 2.5 L8.5 4.8 L12 6.5 L15.5 8.2 L15.5 12 L11.5 14.8 L1 5.5Z" fill="#f5d400" stroke="#000" stroke-width="1.3" stroke-linejoin="round"/><path d="M1 2.5 L4.6 4.4 L8.5 2.5 M4.6 4.4 L4.6 7.2 L11.5 11 L15.5 8.2 M11.5 11 L11.5 14.8 M8.5 4.8 L7 6 L8.2 8.6" fill="none" stroke="#000" stroke-width="1.1" stroke-linejoin="round"/><path d="M4.6 7.6 L11 11.4 L11 13.6 L2 5.8 Z" fill="#c89a00" stroke="none"/></svg><span class="tx" style="left:42px">(-) M24底座<span style="letter-spacing:1.4px">&lt;2&gt;</span> (默认&lt;</span></div>
<div class="trow" style="top:530px;width:174px"><div class="abs" style="left:16px;top:11px;width:4px;height:0;border-top:1px dotted #666"></div><div class="abs" style="left:5px;top:6px;width:11px;height:11px;border:1px solid #8c8f96;border-radius:2px;background:linear-gradient(#fff,#d9dbdf)"></div><div class="abs" style="left:7px;top:11px;width:7px;height:1px;background:#2a3a8c"></div><div class="abs" style="left:10px;top:8px;width:1px;height:7px;background:#2a3a8c"></div><svg class="abs" style="left:21px;top:1px" width="17" height="16" viewBox="0 0 17 16"><path d="M1 2.5 L5 0.8 L8.5 2.5 L8.5 4.8 L12 6.5 L15.5 8.2 L15.5 12 L11.5 14.8 L1 5.5Z" fill="#f5d400" stroke="#000" stroke-width="1.3" stroke-linejoin="round"/><path d="M1 2.5 L4.6 4.4 L8.5 2.5 M4.6 4.4 L4.6 7.2 L11.5 11 L15.5 8.2 M11.5 11 L11.5 14.8 M8.5 4.8 L7 6 L8.2 8.6" fill="none" stroke="#000" stroke-width="1.1" stroke-linejoin="round"/><path d="M4.6 7.6 L11 11.4 L11 13.6 L2 5.8 Z" fill="#c89a00" stroke="none"/></svg><span class="tx" style="left:42px">(-) 机枪手座<span style="letter-spacing:1.4px">&lt;1&gt;</span> (默认&lt;</span></div>
<div class="trow" style="top:552px;width:174px"><div class="abs" style="left:16px;top:11px;width:4px;height:0;border-top:1px dotted #666"></div><div class="abs" style="left:5px;top:6px;width:11px;height:11px;border:1px solid #8c8f96;border-radius:2px;background:linear-gradient(#fff,#d9dbdf)"></div><div class="abs" style="left:7px;top:11px;width:7px;height:1px;background:#2a3a8c"></div><div class="abs" style="left:10px;top:8px;width:1px;height:7px;background:#2a3a8c"></div><svg class="abs" style="left:21px;top:1px" width="17" height="16" viewBox="0 0 17 16"><path d="M1 2.5 L5 0.8 L8.5 2.5 L8.5 4.8 L12 6.5 L15.5 8.2 L15.5 12 L11.5 14.8 L1 5.5Z" fill="#f5d400" stroke="#000" stroke-width="1.3" stroke-linejoin="round"/><path d="M1 2.5 L4.6 4.4 L8.5 2.5 M4.6 4.4 L4.6 7.2 L11.5 11 L15.5 8.2 M11.5 11 L11.5 14.8 M8.5 4.8 L7 6 L8.2 8.6" fill="none" stroke="#000" stroke-width="1.1" stroke-linejoin="round"/><path d="M4.6 7.6 L11 11.4 L11 13.6 L2 5.8 Z" fill="#c89a00" stroke="none"/></svg><span class="tx" style="left:42px">(-) 前舷窗<span style="letter-spacing:1.4px">&lt;2&gt;</span> (默认&lt;</span></div>
<div class="trow" style="top:574px;width:174px"><div class="abs" style="left:16px;top:11px;width:4px;height:0;border-top:1px dotted #666"></div><div class="abs" style="left:5px;top:6px;width:11px;height:11px;border:1px solid #8c8f96;border-radius:2px;background:linear-gradient(#fff,#d9dbdf)"></div><div class="abs" style="left:7px;top:11px;width:7px;height:1px;background:#2a3a8c"></div><div class="abs" style="left:10px;top:8px;width:1px;height:7px;background:#2a3a8c"></div><svg class="abs" style="left:21px;top:1px" width="17" height="16" viewBox="0 0 17 16"><path d="M1 2.5 L5 0.8 L8.5 2.5 L8.5 4.8 L12 6.5 L15.5 8.2 L15.5 12 L11.5 14.8 L1 5.5Z" fill="#f5d400" stroke="#000" stroke-width="1.3" stroke-linejoin="round"/><path d="M1 2.5 L4.6 4.4 L8.5 2.5 M4.6 4.4 L4.6 7.2 L11.5 11 L15.5 8.2 M11.5 11 L11.5 14.8 M8.5 4.8 L7 6 L8.2 8.6" fill="none" stroke="#000" stroke-width="1.1" stroke-linejoin="round"/><path d="M4.6 7.6 L11 11.4 L11 13.6 L2 5.8 Z" fill="#c89a00" stroke="none"/></svg><span class="tx" style="left:42px">(-) M24<span style="letter-spacing:1.4px">&lt;2&gt;</span> (默认&lt;</span></div>
<div class="trow" style="top:596px;width:174px"><div class="abs" style="left:16px;top:11px;width:4px;height:0;border-top:1px dotted #666"></div><div class="abs" style="left:5px;top:6px;width:11px;height:11px;border:1px solid #8c8f96;border-radius:2px;background:linear-gradient(#fff,#d9dbdf)"></div><div class="abs" style="left:7px;top:11px;width:7px;height:1px;background:#2a3a8c"></div><div class="abs" style="left:10px;top:8px;width:1px;height:7px;background:#2a3a8c"></div><svg class="abs" style="left:21px;top:1px" width="17" height="16" viewBox="0 0 17 16"><path d="M1 2.5 L5 0.8 L8.5 2.5 L8.5 4.8 L12 6.5 L15.5 8.2 L15.5 12 L11.5 14.8 L1 5.5Z" fill="#f5d400" stroke="#000" stroke-width="1.3" stroke-linejoin="round"/><path d="M1 2.5 L4.6 4.4 L8.5 2.5 M4.6 4.4 L4.6 7.2 L11.5 11 L15.5 8.2 M11.5 11 L11.5 14.8 M8.5 4.8 L7 6 L8.2 8.6" fill="none" stroke="#000" stroke-width="1.1" stroke-linejoin="round"/><path d="M4.6 7.6 L11 11.4 L11 13.6 L2 5.8 Z" fill="#c89a00" stroke="none"/></svg><span class="tx" style="left:42px">(-) 驾驶员座<span style="letter-spacing:1.4px">&lt;1&gt;</span> (默认&lt;</span></div>
<div class="trow" style="top:618px;width:174px"><div class="abs" style="left:16px;top:11px;width:4px;height:0;border-top:1px dotted #666"></div><div class="abs" style="left:5px;top:6px;width:11px;height:11px;border:1px solid #8c8f96;border-radius:2px;background:linear-gradient(#fff,#d9dbdf)"></div><div class="abs" style="left:7px;top:11px;width:7px;height:1px;background:#2a3a8c"></div><div class="abs" style="left:10px;top:8px;width:1px;height:7px;background:#2a3a8c"></div><svg class="abs" style="left:21px;top:1px" width="17" height="16" viewBox="0 0 17 16"><path d="M1 2.5 L5 0.8 L8.5 2.5 L8.5 4.8 L12 6.5 L15.5 8.2 L15.5 12 L11.5 14.8 L1 5.5Z" fill="#f5d400" stroke="#000" stroke-width="1.3" stroke-linejoin="round"/><path d="M1 2.5 L4.6 4.4 L8.5 2.5 M4.6 4.4 L4.6 7.2 L11.5 11 L15.5 8.2 M11.5 11 L11.5 14.8 M8.5 4.8 L7 6 L8.2 8.6" fill="none" stroke="#000" stroke-width="1.1" stroke-linejoin="round"/><path d="M4.6 7.6 L11 11.4 L11 13.6 L2 5.8 Z" fill="#c89a00" stroke="none"/></svg><span class="tx" style="left:42px">(-) 后舷窗<span style="letter-spacing:1.4px">&lt;1&gt;</span> (默认&lt;</span></div>
<div class="trow" style="top:640px;width:174px"><div class="abs" style="left:16px;top:11px;width:4px;height:0;border-top:1px dotted #666"></div><div class="abs" style="left:5px;top:6px;width:11px;height:11px;border:1px solid #8c8f96;border-radius:2px;background:linear-gradient(#fff,#d9dbdf)"></div><div class="abs" style="left:7px;top:11px;width:7px;height:1px;background:#2a3a8c"></div><div class="abs" style="left:10px;top:8px;width:1px;height:7px;background:#2a3a8c"></div><svg class="abs" style="left:21px;top:1px" width="17" height="16" viewBox="0 0 17 16"><path d="M1 2.5 L5 0.8 L8.5 2.5 L8.5 4.8 L12 6.5 L15.5 8.2 L15.5 12 L11.5 14.8 L1 5.5Z" fill="#f5d400" stroke="#000" stroke-width="1.3" stroke-linejoin="round"/><path d="M1 2.5 L4.6 4.4 L8.5 2.5 M4.6 4.4 L4.6 7.2 L11.5 11 L15.5 8.2 M11.5 11 L11.5 14.8 M8.5 4.8 L7 6 L8.2 8.6" fill="none" stroke="#000" stroke-width="1.1" stroke-linejoin="round"/><path d="M4.6 7.6 L11 11.4 L11 13.6 L2 5.8 Z" fill="#c89a00" stroke="none"/></svg><span class="tx" style="left:42px">(-) 机枪手座<span style="letter-spacing:1.4px">&lt;2&gt;</span> (默认&lt;</span></div>
<div class="trow warn" style="top:662px;width:174px"><div class="abs" style="left:16px;top:11px;width:4px;height:0;border-top:1px dotted #666"></div><div class="abs" style="left:5px;top:6px;width:11px;height:11px;border:1px solid #8c8f96;border-radius:2px;background:linear-gradient(#fff,#d9dbdf)"></div><div class="abs" style="left:7px;top:11px;width:7px;height:1px;background:#2a3a8c"></div><div class="abs" style="left:10px;top:8px;width:1px;height:7px;background:#2a3a8c"></div><svg class="abs" style="left:21px;top:1px" width="17" height="16" viewBox="0 0 17 16"><path d="M1 2.5 L5 0.8 L8.5 2.5 L8.5 4.8 L12 6.5 L15.5 8.2 L15.5 12 L11.5 14.8 L1 5.5Z" fill="#f5d400" stroke="#000" stroke-width="1.3" stroke-linejoin="round"/><path d="M1 2.5 L4.6 4.4 L8.5 2.5 M4.6 4.4 L4.6 7.2 L11.5 11 L15.5 8.2 M11.5 11 L11.5 14.8 M8.5 4.8 L7 6 L8.2 8.6" fill="none" stroke="#000" stroke-width="1.1" stroke-linejoin="round"/><path d="M4.6 7.6 L11 11.4 L11 13.6 L2 5.8 Z" fill="#c89a00" stroke="none"/></svg><svg class="abs" style="left:40px;top:3px" width="15" height="14" viewBox="0 0 15 14"><path d="M7.5 1 L14 13 L1 13Z" fill="#ffe81a" stroke="#222" stroke-width="1.1" stroke-linejoin="round"/><path d="M7.5 4.5 L7.5 9.2" stroke="#000" stroke-width="1.8"/><rect x="6.6" y="10.2" width="1.8" height="1.7" fill="#000"/></svg><span class="tx" style="left:59px">(-) 主旋翼<span style="letter-spacing:1.4px">&lt;1&gt;</span> (默认&lt;</span></div>
<div class="trow" style="top:684px;width:174px"><div class="abs" style="left:16px;top:11px;width:4px;height:0;border-top:1px dotted #666"></div><div class="abs" style="left:5px;top:6px;width:11px;height:11px;border:1px solid #8c8f96;border-radius:2px;background:linear-gradient(#fff,#d9dbdf)"></div><div class="abs" style="left:7px;top:11px;width:7px;height:1px;background:#2a3a8c"></div><div class="abs" style="left:10px;top:8px;width:1px;height:7px;background:#2a3a8c"></div><svg class="abs" style="left:21px;top:1px" width="17" height="16" viewBox="0 0 17 16"><path d="M1 2.5 L5 0.8 L8.5 2.5 L8.5 4.8 L12 6.5 L15.5 8.2 L15.5 12 L11.5 14.8 L1 5.5Z" fill="#f5d400" stroke="#000" stroke-width="1.3" stroke-linejoin="round"/><path d="M1 2.5 L4.6 4.4 L8.5 2.5 M4.6 4.4 L4.6 7.2 L11.5 11 L15.5 8.2 M11.5 11 L11.5 14.8 M8.5 4.8 L7 6 L8.2 8.6" fill="none" stroke="#000" stroke-width="1.1" stroke-linejoin="round"/><path d="M4.6 7.6 L11 11.4 L11 13.6 L2 5.8 Z" fill="#c89a00" stroke="none"/></svg><span class="tx" style="left:42px">(-) 驾驶员座<span style="letter-spacing:1.4px">&lt;2&gt;</span> (默认&lt;</span></div>
<div class="trow" style="top:706px;width:174px"><div class="abs" style="left:16px;top:11px;width:4px;height:0;border-top:1px dotted #666"></div><div class="abs" style="left:5px;top:6px;width:11px;height:11px;border:1px solid #8c8f96;border-radius:2px;background:linear-gradient(#fff,#d9dbdf)"></div><div class="abs" style="left:7px;top:11px;width:7px;height:1px;background:#2a3a8c"></div><div class="abs" style="left:10px;top:8px;width:1px;height:7px;background:#2a3a8c"></div><svg class="abs" style="left:21px;top:1px" width="17" height="16" viewBox="0 0 17 16"><path d="M1 2.5 L5 0.8 L8.5 2.5 L8.5 4.8 L12 6.5 L15.5 8.2 L15.5 12 L11.5 14.8 L1 5.5Z" fill="#f5d400" stroke="#000" stroke-width="1.3" stroke-linejoin="round"/><path d="M1 2.5 L4.6 4.4 L8.5 2.5 M4.6 4.4 L4.6 7.2 L11.5 11 L15.5 8.2 M11.5 11 L11.5 14.8 M8.5 4.8 L7 6 L8.2 8.6" fill="none" stroke="#000" stroke-width="1.1" stroke-linejoin="round"/><path d="M4.6 7.6 L11 11.4 L11 13.6 L2 5.8 Z" fill="#c89a00" stroke="none"/></svg><span class="tx" style="left:42px">(-) 后舷窗<span style="letter-spacing:1.4px">&lt;2&gt;</span> (默认&lt;</span></div>
</div>
<div class="abs" style="left:175px;top:51px;width:17px;height:721px;background:#eceef1"></div>
<div class="abs" style="left:175px;top:74px;width:17px;height:600px;background:linear-gradient(90deg,#f6f6f6,#e0e0e0 45%,#d6d6d8 70%,#bebec2);border:1px solid #a8a8a8;border-right:none;border-radius:2px 0 0 2px"></div>
<div class="abs" style="left:180px;top:368px;width:8px;height:8px;border-top:1px solid #666;border-bottom:1px solid #666"></div><div class="abs" style="left:180px;top:372px;width:8px;height:1px;background:#666"></div>
<div class="abs" style="left:179px;top:59px;width:0;height:0;border-left:5px solid transparent;border-right:5px solid transparent;border-bottom:5px solid #444"></div>
<div class="abs" style="left:179px;top:760px;width:0;height:0;border-left:5px solid transparent;border-right:5px solid transparent;border-top:5px solid #444"></div>
<div class="abs" style="left:0;top:772px;width:175px;height:21px;background:#eceef1"></div>
<div class="abs" style="left:175px;top:772px;width:17px;height:21px;background:#e2e5ea"></div>
<div class="abs" style="left:21px;top:774px;width:62px;height:17px;background:linear-gradient(#f4f4f4,#dcdcdc 60%,#cacaca);border:1px solid #a8a8a8;border-radius:2px"></div>
<div class="abs" style="left:47px;top:778px;width:9px;height:9px;border-left:1px solid #555;border-right:1px solid #555"></div><div class="abs" style="left:51px;top:778px;width:1px;height:9px;background:#555"></div>
<div class="abs" style="left:6px;top:778px;width:0;height:0;border-top:5px solid transparent;border-bottom:5px solid transparent;border-right:5px solid #444"></div>
<div class="abs" style="left:160px;top:778px;width:0;height:0;border-top:5px solid transparent;border-bottom:5px solid transparent;border-left:5px solid #444"></div>
<div class="abs" style="left:0;top:793px;width:191px;height:2px;background:#8f9cc4"></div>
</div>
<div class="abs" style="left:283px;top:491px;width:9px;height:38px;background:#eef0f3;border:1px solid #444;border-left:none"></div>
<div class="abs" style="left:285px;top:498px;width:0;height:0;border-top:3px solid transparent;border-bottom:3px solid transparent;border-right:4px solid #222"></div>
<div class="abs" style="left:285px;top:507px;width:0;height:0;border-top:3px solid transparent;border-bottom:3px solid transparent;border-right:4px solid #222"></div>
<div class="abs" style="left:285px;top:516px;width:0;height:0;border-top:3px solid transparent;border-bottom:3px solid transparent;border-right:4px solid #222"></div>
<div class="abs" style="left:1840px;top:103px;width:76px;height:836px;background:#d8dbe0;border-left:1px solid #3f4a55;border-bottom:1px solid #f4f5f7"></div>
<div class="abs" style="left:1842px;top:103px;width:48px;height:612px;border-right:1px solid #a9acb2;border-bottom:1px solid #f4f5f7;box-shadow:1px 0 0 #f0f1f3"></div>
<div class="abs" style="left:1891px;top:103px;width:25px;height:236px;border-bottom:1px solid #a9acb2;box-shadow:0 1px 0 #f4f5f7"></div>
<div class="abs" style="left:1846px;top:108px;width:39px;height:2px;background:repeating-linear-gradient(90deg,#555 0 1.5px,transparent 1.5px 3px)"></div>
<div class="abs" style="left:1895px;top:108px;width:21px;height:2px;background:repeating-linear-gradient(90deg,#555 0 1.5px,transparent 1.5px 3px)"></div>
<svg class="abs" style="left:1845px;top:118.5px" width="20" height="20" viewBox="0 0 20 20" fill="none" ><path d="M9 3 L3 3 Q1 16 14 16" stroke="#1414b4" stroke-width="1.8"/><path d="M4 11 L14 4 L16.5 6.5 L6.5 13 L3 14Z" fill="#f7d23a" stroke="#6a4a00" stroke-width="0.8"/><path d="M14 4 L16.5 6.5 L18 5.2 L16 3Z" fill="#d01818"/></svg>
<div class="abs" style="left:1875px;top:128.5px;width:0;height:0;border-left:3px solid transparent;border-right:3px solid transparent;border-top:3px solid #222"></div>
<svg class="abs" style="left:1845px;top:141px" width="20" height="20" viewBox="0 0 20 20" fill="none" ><path d="M3 10 L12 4 L17 10 L8 16Z" stroke="#1414b4" stroke-width="1.6" fill="#fff"/><path d="M8 16 L17 10" stroke="#111" stroke-width="2"/><path d="M5 7 L5 4 M5 4 L9 2" stroke="#1414b4" stroke-width="1.2"/></svg>
<div class="abs" style="left:1875px;top:151px;width:0;height:0;border-left:3px solid transparent;border-right:3px solid transparent;border-top:3px solid #222"></div>
<div class="abs" style="left:1846px;top:166px;width:40px;height:1px;background:#8e9096"></div>
<svg class="abs" style="left:1845px;top:172px" width="20" height="20" viewBox="0 0 20 20" fill="none" ><path d="M2 3 L17 17" stroke="#1414b4" stroke-width="2"/><path d="M12 14 L17 17" stroke="#111" stroke-width="2"/></svg>
<div class="abs" style="left:1875px;top:182px;width:0;height:0;border-left:3px solid transparent;border-right:3px solid transparent;border-top:3px solid #222"></div>
<svg class="abs" style="left:1845px;top:195px" width="20" height="20" viewBox="0 0 20 20" fill="none" ><path d="M3 4 L17 4 L17 16 L3 16Z" stroke="#1414b4" stroke-width="1.8"/><path d="M17 9 L17 16 L10 16" stroke="#111" stroke-width="1.8"/><rect x="8.7" y="8.7" width="2.6" height="2.6" fill="#fff" stroke="#d01818" stroke-width="1"/><rect x="15.7" y="2.7" width="2.6" height="2.6" fill="#fff" stroke="#d01818" stroke-width="1"/></svg>
<div class="abs" style="left:1875px;top:205px;width:0;height:0;border-left:3px solid transparent;border-right:3px solid transparent;border-top:3px solid #222"></div>
<svg class="abs" style="left:1845px;top:217.5px" width="20" height="20" viewBox="0 0 20 20" fill="none" ><rect x="2" y="5" width="16" height="10" rx="5" stroke="#1414b4" stroke-width="2"/><rect x="5.7" y="8.7" width="2.6" height="2.6" fill="#fff" stroke="#d01818" stroke-width="1"/><rect x="11.7" y="8.7" width="2.6" height="2.6" fill="#fff" stroke="#d01818" stroke-width="1"/></svg>
<div class="abs" style="left:1875px;top:227.5px;width:0;height:0;border-left:3px solid transparent;border-right:3px solid transparent;border-top:3px solid #222"></div>
<svg class="abs" style="left:1845px;top:241px" width="20" height="20" viewBox="0 0 20 20" fill="none" ><circle cx="10" cy="10" r="7" stroke="#1414b4" stroke-width="1.7"/><path d="M10 8 L10 12 M8 10 L12 10" stroke="#111" stroke-width="0.9"/><rect x="8.7" y="1.7" width="2.6" height="2.6" fill="#fff" stroke="#d01818" stroke-width="1"/><rect x="15.2" y="10.7" width="2.6" height="2.6" fill="#fff" stroke="#d01818" stroke-width="1"/><rect x="3.2" y="13.2" width="2.6" height="2.6" fill="#fff" stroke="#d01818" stroke-width="1"/></svg>
<div class="abs" style="left:1875px;top:251px;width:0;height:0;border-left:3px solid transparent;border-right:3px solid transparent;border-top:3px solid #222"></div>
<svg class="abs" style="left:1845px;top:264.5px" width="20" height="20" viewBox="0 0 20 20" fill="none" ><path d="M3 15 A7 7 0 0 1 17 15" stroke="#1414b4" stroke-width="1.8"/><path d="M10 13 L10 17 M8 15 L12 15" stroke="#111" stroke-width="0.9"/><rect x="1.7" y="13.7" width="2.6" height="2.6" fill="#fff" stroke="#d01818" stroke-width="1"/><rect x="15.7" y="13.7" width="2.6" height="2.6" fill="#fff" stroke="#d01818" stroke-width="1"/><rect x="8.7" y="6.7" width="2.6" height="2.6" fill="#fff" stroke="#d01818" stroke-width="1"/></svg>
<div class="abs" style="left:1875px;top:274.5px;width:0;height:0;border-left:3px solid transparent;border-right:3px solid transparent;border-top:3px solid #222"></div>
<svg class="abs" style="left:1845px;top:288px" width="20" height="20" viewBox="0 0 20 20" fill="none" ><path d="M3 17 L3 11 Q3 7 7 9 T12 12 Q17 13 17 7 L17 3" stroke="#1414b4" stroke-width="2.2"/></svg>
<div class="abs" style="left:1875px;top:298px;width:0;height:0;border-left:3px solid transparent;border-right:3px solid transparent;border-top:3px solid #222"></div>
<svg class="abs" style="left:1845px;top:310px" width="20" height="20" viewBox="0 0 20 20" fill="none" ><ellipse cx="10" cy="10" rx="8.5" ry="3.6" transform="rotate(-38 10 10)" stroke="#1414b4" stroke-width="1.8"/><path d="M9 9 L11 11 M11 9 L9 11" stroke="#111" stroke-width="0.8"/></svg>
<div class="abs" style="left:1875px;top:320px;width:0;height:0;border-left:3px solid transparent;border-right:3px solid transparent;border-top:3px solid #222"></div>
<svg class="abs" style="left:1845px;top:335px" width="20" height="20" viewBox="0 0 20 20" fill="none" ><path d="M3 3 L10 3 Q16 3 16 10 L16 17" stroke="#a8aaae" stroke-width="1.6"/><path d="M6 10 L6 14 M4 12 L8 12" stroke="#a8aaae" stroke-width="0.9"/></svg>
<div class="abs" style="left:1875px;top:345px;width:0;height:0;border-left:3px solid transparent;border-right:3px solid transparent;border-top:3px solid #999"></div>
<svg class="abs" style="left:1845px;top:355px" width="20" height="20" viewBox="0 0 20 20" fill="none" ><path d="M10 3 L16 6.5 L16 13.5 L10 17 L4 13.5 L4 6.5Z" stroke="#1414b4" stroke-width="1.6"/><path d="M10 8 L10 12 M8 10 L12 10" stroke="#111" stroke-width="0.9"/></svg>
<svg class="abs" style="left:1845px;top:380px" width="20" height="20" viewBox="0 0 20 20" fill="none" ><path d="M10 5 L10 15 M5 10 L15 10 M6.5 6.5 L13.5 13.5 M13.5 6.5 L6.5 13.5" stroke="#1414b4" stroke-width="1.1"/></svg>
<svg class="abs" style="left:1845px;top:402px" width="20" height="20" viewBox="0 0 20 20" fill="none" ><path d="M2 3 L17 5 L17 17 L3 15Z M2 9 L17 11 M9.5 4 L10 16" stroke="#1414b4" stroke-width="1.2" stroke-dasharray="2 1.4"/></svg>
<svg class="abs" style="left:1845px;top:425px" width="20" height="20" viewBox="0 0 20 20" fill="none" ><path d="M2 17 L8 2 L12 2 L18 17 L14 17 L12.8 13.5 L7.2 13.5 L6 17Z M8.4 10.5 L11.6 10.5 L10 5.5Z" stroke="#1414b4" stroke-width="1.3" fill="#e8e8ff"/><path d="M4 17 L9 4 M16 17 L11 4" stroke="#1414b4" stroke-width="0.7"/></svg>
<div class="abs" style="left:1846px;top:450px;width:40px;height:1px;background:#8e9096"></div>
<svg class="abs" style="left:1845px;top:456px" width="20" height="20" viewBox="0 0 20 20" fill="none" ><path d="M2 8 L18 8 M10 2 L10 18 M5 3 L8 7 M3 5 L7 5 M12 12 L16 12" stroke="#a8aaae" stroke-width="1.6"/></svg>
<div class="abs" style="left:1875px;top:466px;width:0;height:0;border-left:3px solid transparent;border-right:3px solid transparent;border-top:3px solid #999"></div>
<svg class="abs" style="left:1845px;top:479.5px" width="20" height="20" viewBox="0 0 20 20" fill="none" ><path d="M2 5 L6 2 L17 2 L17 14 L13 17 L2 17Z" fill="#fff" stroke="#111" stroke-width="1.5"/><path d="M6 2 L6 14 L2 17 M6 14 L17 14" stroke="#111" stroke-width="1"/><path d="M6.7 4 L6.7 14" stroke="#1a4ae0" stroke-width="2.4"/></svg>
<div class="abs" style="left:1875px;top:489.5px;width:0;height:0;border-left:3px solid transparent;border-right:3px solid transparent;border-top:3px solid #222"></div>
<svg class="abs" style="left:1845px;top:503px" width="20" height="20" viewBox="0 0 20 20" fill="none" ><path d="M2 3 L17 3 L17 7 L6 17 M2 8 L11 8 L5 14" stroke="#a8aaae" stroke-width="1.7"/></svg>
<svg class="abs" style="left:1845px;top:525px" width="20" height="20" viewBox="0 0 20 20" fill="none" ><path d="M10 2 L10 18" stroke="#a8aaae" stroke-width="1" stroke-dasharray="2 1.5"/><path d="M10 3 L4 15 L16 15Z" stroke="#a8aaae" stroke-width="1.5"/><path d="M3 17 L17 17" stroke="#a8aaae" stroke-width="1.2"/></svg>
<svg class="abs" style="left:1845px;top:549px" width="20" height="20" viewBox="0 0 20 20" fill="none" ><rect x="2.5" y="2.5" width="3.4" height="3.4" fill="#a8aaae"/><rect x="2.5" y="8.3" width="3.4" height="3.4" fill="#a8aaae"/><rect x="2.5" y="14" width="3.4" height="3.4" fill="#a8aaae"/><rect x="8.3" y="2.5" width="3.4" height="3.4" fill="#a8aaae"/><rect x="8.3" y="8.3" width="3.4" height="3.4" fill="#a8aaae"/><rect x="8.3" y="14" width="3.4" height="3.4" fill="#a8aaae"/><rect x="14" y="2.5" width="3.4" height="3.4" fill="#a8aaae"/><rect x="14" y="8.3" width="3.4" height="3.4" fill="#a8aaae"/><rect x="14" y="14" width="3.4" height="3.4" fill="#a8aaae"/></svg>
<div class="abs" style="left:1875px;top:559px;width:0;height:0;border-left:3px solid transparent;border-right:3px solid transparent;border-top:3px solid #999"></div>
<svg class="abs" style="left:1845px;top:572px" width="20" height="20" viewBox="0 0 20 20" fill="none" ><path d="M3 3 L9 3 L9 9 L3 9Z" stroke="#a8aaae" stroke-width="1.2" stroke-dasharray="1.5 1.2"/><rect x="11" y="11" width="6.5" height="6.5" stroke="#a8aaae" stroke-width="1.6"/><path d="M4 11 L9 16 M9 16 L9 12 M9 16 L5 16" stroke="#a8aaae" stroke-width="1.4"/></svg>
<div class="abs" style="left:1875px;top:582px;width:0;height:0;border-left:3px solid transparent;border-right:3px solid transparent;border-top:3px solid #999"></div>
<div class="abs" style="left:1846px;top:595px;width:40px;height:1px;background:#8e9096"></div>
<svg class="abs" style="left:1845px;top:602px" width="20" height="20" viewBox="0 0 20 20" fill="none" ><path d="M3 16 L17 16" stroke="#a8aaae" stroke-width="1.6"/><circle cx="7" cy="11" r="2.6" stroke="#a8aaae" stroke-width="1.2"/><circle cx="13" cy="11" r="2.6" stroke="#a8aaae" stroke-width="1.2"/><path d="M7 8 Q6 3 9 3 M11 8 L13 3" stroke="#a8aaae" stroke-width="1.1"/></svg>
<div class="abs" style="left:1875px;top:612px;width:0;height:0;border-left:3px solid transparent;border-right:3px solid transparent;border-top:3px solid #999"></div>
<svg class="abs" style="left:1845px;top:624px" width="20" height="20" viewBox="0 0 20 20" fill="none" ><path d="M2 6 L8 6 M5 3 L5 9" stroke="#a8aaae" stroke-width="1.8"/><path d="M9 15 L14 5 L16.5 6.2 L11.5 16.2 L9 17.5Z" stroke="#a8aaae" stroke-width="1.1" fill="#e4e6e9"/></svg>
<div class="abs" style="left:1846px;top:649px;width:40px;height:1px;background:#8e9096"></div>
<svg class="abs" style="left:1845px;top:657px" width="20" height="20" viewBox="0 0 20 20" fill="none" ><path d="M3 18 L3 3 L18 3" stroke="#a8aaae" stroke-width="1.8"/><circle cx="11" cy="11" r="5.4" stroke="#a8aaae" stroke-width="1.2"/><circle cx="11" cy="11" r="1.6" fill="#a8aaae"/></svg>
<div class="abs" style="left:1875px;top:667px;width:0;height:0;border-left:3px solid transparent;border-right:3px solid transparent;border-top:3px solid #999"></div>
<div class="abs" style="left:1846px;top:681px;width:40px;height:1px;background:#8e9096"></div>
<svg class="abs" style="left:1845px;top:686.5px" width="20" height="20" viewBox="0 0 20 20" fill="none" ><path d="M3 3 L3 11 Q3 17 12 17 L17 17 M3 3 L9 3" stroke="#10109a" stroke-width="2"/><path d="M11 4 L16 4 L12.5 9 L16 9 L8 17 L10.5 11 L7.5 11Z" fill="#ffd820" stroke="#a06a00" stroke-width="0.8"/><circle cx="15.5" cy="3.5" r="1.6" fill="#d01818"/></svg>
<svg class="abs" style="left:1895px;top:118.5px" width="20" height="20" viewBox="0 0 20 20" fill="none" ><path d="M3 17 L9 11 Q12 6 17 5" stroke="#a8aaae" stroke-width="2.2"/><path d="M6 4 L7 7 M3 6 L6 7 M9 3 L8 6" stroke="#a8aaae" stroke-width="0.8"/><path d="M13 3 L17 7" stroke="#a8aaae" stroke-width="1.6"/></svg>
<svg class="abs" style="left:1895px;top:141px" width="20" height="20" viewBox="0 0 20 20" fill="none" ><circle cx="11" cy="12" r="5.2" stroke="#a8aaae" stroke-width="1.8"/><path d="M4 7 L16 6" stroke="#a8aaae" stroke-width="1.4"/><path d="M5 3 L6 6 M2 5 L5 6" stroke="#a8aaae" stroke-width="0.8"/></svg>
<svg class="abs" style="left:1895px;top:164.5px" width="20" height="20" viewBox="0 0 20 20" fill="none" ><path d="M3 18 Q4 6 17 4" stroke="#a8aaae" stroke-width="2"/><circle cx="8" cy="8.5" r="2" fill="#a8aaae"/></svg>
<svg class="abs" style="left:1895px;top:187px" width="20" height="20" viewBox="0 0 20 20" fill="none" ><path d="M2 9 Q6 5 9 7 T17 4 M2 15 Q6 11 9 13 T17 10" stroke="#a8aaae" stroke-width="1.5"/><circle cx="6" cy="7" r="1" fill="#a8aaae"/><circle cx="12" cy="6" r="1" fill="#a8aaae"/><circle cx="6" cy="13" r="1" fill="#a8aaae"/><circle cx="12" cy="12" r="1" fill="#a8aaae"/></svg>
<svg class="abs" style="left:1895px;top:209px" width="20" height="20" viewBox="0 0 20 20" fill="none" ><path d="M4 2 L4 16 L18 16" stroke="#a8aaae" stroke-width="2.8"/><path d="M7 5 Q7 13 16 13" stroke="#a8aaae" stroke-width="1"/></svg>
<div class="abs" style="left:1894px;top:234px;width:22px;height:1px;background:#8e9096"></div>
<svg class="abs" style="left:1895px;top:241.5px" width="20" height="20" viewBox="0 0 20 20" fill="none" ><circle cx="11" cy="12" r="5.2" stroke="#a8aaae" stroke-width="1.8"/><path d="M4 8 L15 5 M8 3 L11 7" stroke="#a8aaae" stroke-width="1.6"/></svg>
<svg class="abs" style="left:1895px;top:264px" width="20" height="20" viewBox="0 0 20 20" fill="none" ><path d="M4 3 Q10 10 4 17 M16 3 Q10 10 16 17" stroke="#a8aaae" stroke-width="2"/><path d="M4 10 L16 10" stroke="#a8aaae" stroke-width="1"/></svg>
<svg class="abs" style="left:1895px;top:288px" width="20" height="20" viewBox="0 0 20 20" fill="none" ><path d="M3 17 L3 10 A7 7 0 0 1 17 10 L17 17" stroke="#a8aaae" stroke-width="2"/><circle cx="10" cy="10" r="3" stroke="#a8aaae" stroke-width="1.2"/></svg>
<svg class="abs" style="left:1895px;top:310.5px" width="20" height="20" viewBox="0 0 20 20" fill="none" ><path d="M3 17 L3 10 A7 7 0 0 1 17 10 L17 17" stroke="#a8aaae" stroke-width="2"/><path d="M10 4 L10 17 M10 8 L5 15 M10 8 L15 15" stroke="#a8aaae" stroke-width="1.2"/></svg>
<div class="abs" style="left:1817px;top:163px;width:24px;height:23px;background:#eef0f3;border:1px solid #333;border-right:none"></div>
<svg class="abs" style="left:1818px;top:164px" width="22" height="21" viewBox="0 0 22 21" fill="none"><path d="M3 10 L11 3 L19 10" stroke="#c07000" stroke-width="1.8" fill="none"/><path d="M5 10 L5 18 L17 18 L17 10 L11 5Z" fill="#fff4c8" stroke="#c07000" stroke-width="1"/><rect x="9" y="12" width="4" height="6" fill="#f0b020" stroke="#a06000" stroke-width="0.8"/><rect x="15" y="3" width="2.5" height="4" fill="#d02020"/></svg>
<div class="abs" style="left:1817px;top:187px;width:23px;height:23px;background:#a9a9ad;border:1px solid #333;border-right:none"></div>
<svg class="abs" style="left:1818px;top:188px" width="22" height="21" viewBox="0 0 22 21" fill="none"><path d="M2 8 L6 6 L6 17 L2 17Z" fill="#18a818" stroke="#0a500a" stroke-width="0.8"/><path d="M6 6 L10 4 L10 17 L6 17Z" fill="#18a818" stroke="#0a500a" stroke-width="0.8"/><path d="M10 4 L13 3 L13 17 L10 17Z" fill="#f0c020" stroke="#7a5a00" stroke-width="0.8"/><path d="M13 3 L16 4 L19 17 L16 17Z" fill="#3a7ae0" stroke="#103a90" stroke-width="0.8"/></svg>
<div class="abs" style="left:1817px;top:211px;width:23px;height:23px;background:#a9a9ad;border:1px solid #333;border-right:none"></div>
<svg class="abs" style="left:1818px;top:212px" width="22" height="21" viewBox="0 0 22 21" fill="none"><path d="M2 5 L3 3 L8 3 L9 5 L17 5 L17 8 L2 8Z" fill="#f7cf5a" stroke="#a87810" stroke-width="0.9"/><path d="M5 8 L20 8 L17 17 L2 17Z" fill="#fbe08a" stroke="#a87810" stroke-width="0.9"/></svg>
<div class="abs" style="left:1817px;top:235px;width:23px;height:23px;background:#a9a9ad;border:1px solid #333;border-right:none"></div>
<svg class="abs" style="left:1818px;top:236px" width="22" height="21" viewBox="0 0 22 21" fill="none"><rect x="3" y="2" width="15" height="10" fill="#fff" stroke="#3a5a9a" stroke-width="1"/><rect x="5" y="4" width="5" height="3" fill="#f0c020"/><rect x="12" y="4" width="4" height="2" fill="#3a6ad0"/><rect x="5" y="8.5" width="4" height="2" fill="#3a6ad0"/><rect x="11" y="8" width="5" height="3" fill="#f0c020"/><path d="M3 16 L10 16" stroke="#1a3ad0" stroke-width="1.8"/><path d="M9 13 L13 16 L9 19Z" fill="#1a3ad0"/></svg>
<div class="abs" style="left:1817px;top:259px;width:23px;height:23px;background:#a9a9ad;border:1px solid #333;border-right:none"></div>
<svg class="abs" style="left:1818px;top:260px" width="22" height="21" viewBox="0 0 22 21" fill="none"><circle cx="11" cy="10" r="7.5" fill="#e02828"/><path d="M11 10 L3.5 10 A7.5 7.5 0 0 1 11 2.5Z" fill="#3a7ae8"/><path d="M11 10 L11 17.5 A7.5 7.5 0 0 1 3.5 10Z" fill="#28b040"/><path d="M11 10 L18.5 10 A7.5 7.5 0 0 1 11 17.5Z" fill="#f0d020"/><ellipse cx="11" cy="19" rx="6" ry="1.2" fill="#777"/></svg>
<div class="abs" style="left:1817px;top:283px;width:23px;height:23px;background:#a9a9ad;border:1px solid #333;border-right:none"></div>
<svg class="abs" style="left:1818px;top:284px" width="22" height="21" viewBox="0 0 22 21" fill="none"><rect x="4" y="6" width="12" height="12" fill="#fff" stroke="#555" stroke-width="1"/><path d="M6 10 L14 10 M6 12.5 L14 12.5 M6 15 L14 15" stroke="#888" stroke-width="0.9"/><path d="M8 6 L12 2 L18 3 L19 6 L14 8Z" fill="#e8b888" stroke="#7a4a20" stroke-width="0.8"/></svg>
<div class="abs" style="left:1817px;top:307px;width:23px;height:23px;background:#a9a9ad;border:1px solid #333;border-right:none"></div>
<svg class="abs" style="left:1818px;top:308px" width="22" height="21" viewBox="0 0 22 21" fill="none"><path d="M2 3 L14 3 L14 11 L7 11 L4 14 L4 11 L2 11Z" fill="#4a9ae8" stroke="#1a5aa8" stroke-width="0.9"/><path d="M8 8 L20 8 L20 15 L17 15 L17 18 L14 15 L8 15Z" fill="#8ad020" stroke="#4a8a00" stroke-width="0.9"/></svg>
<div class="abs" style="left:283px;top:919px;width:1557px;height:1px;background:#111"></div>
<div class="abs" style="left:90px;top:920px;width:1750px;height:19px;background:#e2e5ea"></div>
<div class="abs" style="left:90px;top:917px;width:2px;height:22px;background:#f6f7f9"></div>
<div class="abs" style="left:117px;top:920px;width:20px;height:18px;background:#9c9db6;border:1px solid #8587a2;border-top-color:#b4b5c8"></div>
<div class="abs" style="left:137px;top:920px;width:20px;height:18px;background:#9c9db6;border:1px solid #8587a2;border-top-color:#b4b5c8"></div>
<div class="abs" style="left:157px;top:920px;width:20px;height:18px;background:#9c9db6;border:1px solid #8587a2;border-top-color:#b4b5c8"></div>
<div class="abs" style="left:177px;top:920px;width:20px;height:18px;background:#9c9db6;border:1px solid #8587a2;border-top-color:#b4b5c8"></div>
<div class="abs" style="left:122px;top:924px;width:2px;height:10px;background:#7f81a0"></div>
<div class="abs" style="left:125px;top:924px;width:0;height:0;border-top:5px solid transparent;border-bottom:5px solid transparent;border-right:6px solid #7f81a0"></div>
<div class="abs" style="left:143px;top:924px;width:0;height:0;border-top:5px solid transparent;border-bottom:5px solid transparent;border-right:6px solid #7f81a0"></div>
<div class="abs" style="left:165px;top:924px;width:0;height:0;border-top:5px solid transparent;border-bottom:5px solid transparent;border-left:6px solid #7f81a0"></div>
<div class="abs" style="left:182px;top:924px;width:0;height:0;border-top:5px solid transparent;border-bottom:5px solid transparent;border-left:6px solid #7f81a0"></div>
<div class="abs" style="left:189px;top:924px;width:2px;height:10px;background:#7f81a0"></div>
<div class="abs" style="left:200px;top:920px;width:56px;height:18px;background:linear-gradient(#e9ecf3,#c4c9da);border:1px solid #555a78;border-top:none;font-size:16px;line-height:18px;text-align:center;color:#1a1a1a;padding-left:2px">模型</div>
<div class="abs" style="left:256px;top:920px;width:75px;height:17px;background:#b6b7ca;border:1px solid #555a78;border-top:none;border-left:none;font-size:16px;line-height:17px;text-align:center;color:#1a1a1a;white-space:nowrap">3D 视图</div>
<div class="abs" style="left:331px;top:920px;width:102px;height:17px;background:#b6b7ca;border:1px solid #555a78;border-top:none;border-left:none;font-size:16px;line-height:17px;text-align:center;color:#1a1a1a;white-space:nowrap">运动算例 1</div>
<div class="abs" style="left:0;top:939px;width:1916px;height:27px;background:#d8dbe0"></div>
<div class="abs" style="left:4px;top:943px;width:2px;height:21px;background:repeating-linear-gradient(#555 0 1.5px,transparent 1.5px 3px)"></div>
<div class="abs" style="left:147px;top:943px;width:2px;height:21px;background:repeating-linear-gradient(#555 0 1.5px,transparent 1.5px 3px)"></div>
<div class="abs" style="left:141px;top:940px;width:1px;height:26px;background:#f2f3f5"></div><div class="abs" style="left:140px;top:940px;width:1px;height:26px;background:#b4b7bd"></div>
<div class="abs" style="left:324px;top:940px;width:1px;height:26px;background:#f2f3f5"></div><div class="abs" style="left:323px;top:940px;width:1px;height:26px;background:#b4b7bd"></div>
<div class="abs" style="left:15px;top:943px;width:97px;height:20px;background:#f1f2f4;border:1px solid #8e9197;border-radius:3px"></div>
<div class="abs" style="left:97px;top:951px;width:0;height:0;border-left:5px solid transparent;border-right:5px solid transparent;border-top:5px solid #444"></div>
<svg class="abs" style="left:114px;top:943px" width="20" height="20" viewBox="0 0 20 20" fill="none" stroke="#a9abb0" stroke-width="1.2"><path d="M3 6 L8 3 L17 3 L17 14 L12 17 L3 17Z" fill="#e4e6e9"/><path d="M3 8.5 L12 8.5 L17 5.5 M3 11 L12 11 L17 8 M3 13.5 L12 13.5 L17 10.5 M3 6 L12 6 L17 3 M12 6 L12 17"/></svg>
<svg class="abs" style="left:157.5px;top:943px" width="20" height="20" viewBox="0 0 20 20" fill="none" stroke="#a9abb0" stroke-width="1.2"><path d="M3 6 L8 3 L17 3 L17 14 L12 17 L3 17Z" fill="#e4e6e9"/><path d="M3 8.5 L12 8.5 L17 5.5 M3 11 L12 11 L17 8 M3 13.5 L12 13.5 L17 10.5 M3 6 L12 6 L17 3 M12 6 L12 17"/><path d="M7 15 L14 4 L16 5 L9 16Z" fill="#e4e6e9"/></svg>
<svg class="abs" style="left:180.5px;top:943px" width="20" height="20" viewBox="0 0 20 20" fill="none" stroke="#a9abb0" stroke-width="1.2"><path d="M3 6 L8 3 L17 3 L17 14 L12 17 L3 17Z" fill="#e4e6e9"/><path d="M3 8.5 L12 8.5 L17 5.5 M3 11 L12 11 L17 8 M3 13.5 L12 13.5 L17 10.5 M3 6 L12 6 L17 3 M12 6 L12 17"/></svg>
<svg class="abs" style="left:203px;top:943px" width="20" height="20" viewBox="0 0 20 20" fill="none" stroke="#a9abb0" stroke-width="1.2"><circle cx="8" cy="7" r="3.5"/><path d="M3 17 L15 3 M6 17 L17 5" stroke-width="1.6"/></svg>
<svg class="abs" style="left:226px;top:943px" width="20" height="20" viewBox="0 0 20 20"><path d="M1 4 L19 4 M1 8.5 L19 8.5 M1 13 L19 13 M1 17.5 L19 17.5" stroke="#8e9096" stroke-width="2.2"/></svg>
<svg class="abs" style="left:249px;top:943px" width="20" height="20" viewBox="0 0 20 20"><path d="M1 4 L19 4" stroke="#8e9096" stroke-width="2.2"/><path d="M1 8 L19 8 M1 11 L19 11 M1 14 L19 14 M1 17 L19 17" stroke="#8e9096" stroke-width="1.5" stroke-dasharray="1.5 1.5"/></svg>
<svg class="abs" style="left:272px;top:943px" width="20" height="20" viewBox="0 0 20 20" fill="none"><path d="M3 2 L3 18 M17 2 L17 18" stroke="#8e9096" stroke-width="2"/><path d="M6 7 L14 7 M11 4 L14 7 L11 10 M14 13 L6 13 M9 10 L6 13 L9 16" stroke="#8e9096" stroke-width="1.3"/></svg>
<div class="abs" style="left:295px;top:942px;width:23px;height:22px;background:#b8bbc3;border:1px solid #6a6c72"></div>
<svg class="abs" style="left:296px;top:943px" width="21" height="20" viewBox="0 0 21 20" fill="none"><path d="M3 2 L3 12 L12 12 M3 8 L8 8 L8 12" stroke="#1a1ac8" stroke-width="2"/><path d="M2 17 L7 17" stroke="#d02020" stroke-width="2"/><path d="M8 17 L13 17" stroke="#20b020" stroke-width="2"/><path d="M13 17 L19 17" stroke="#1a1ac8" stroke-width="2"/></svg>
</div>
</body>
</html>
